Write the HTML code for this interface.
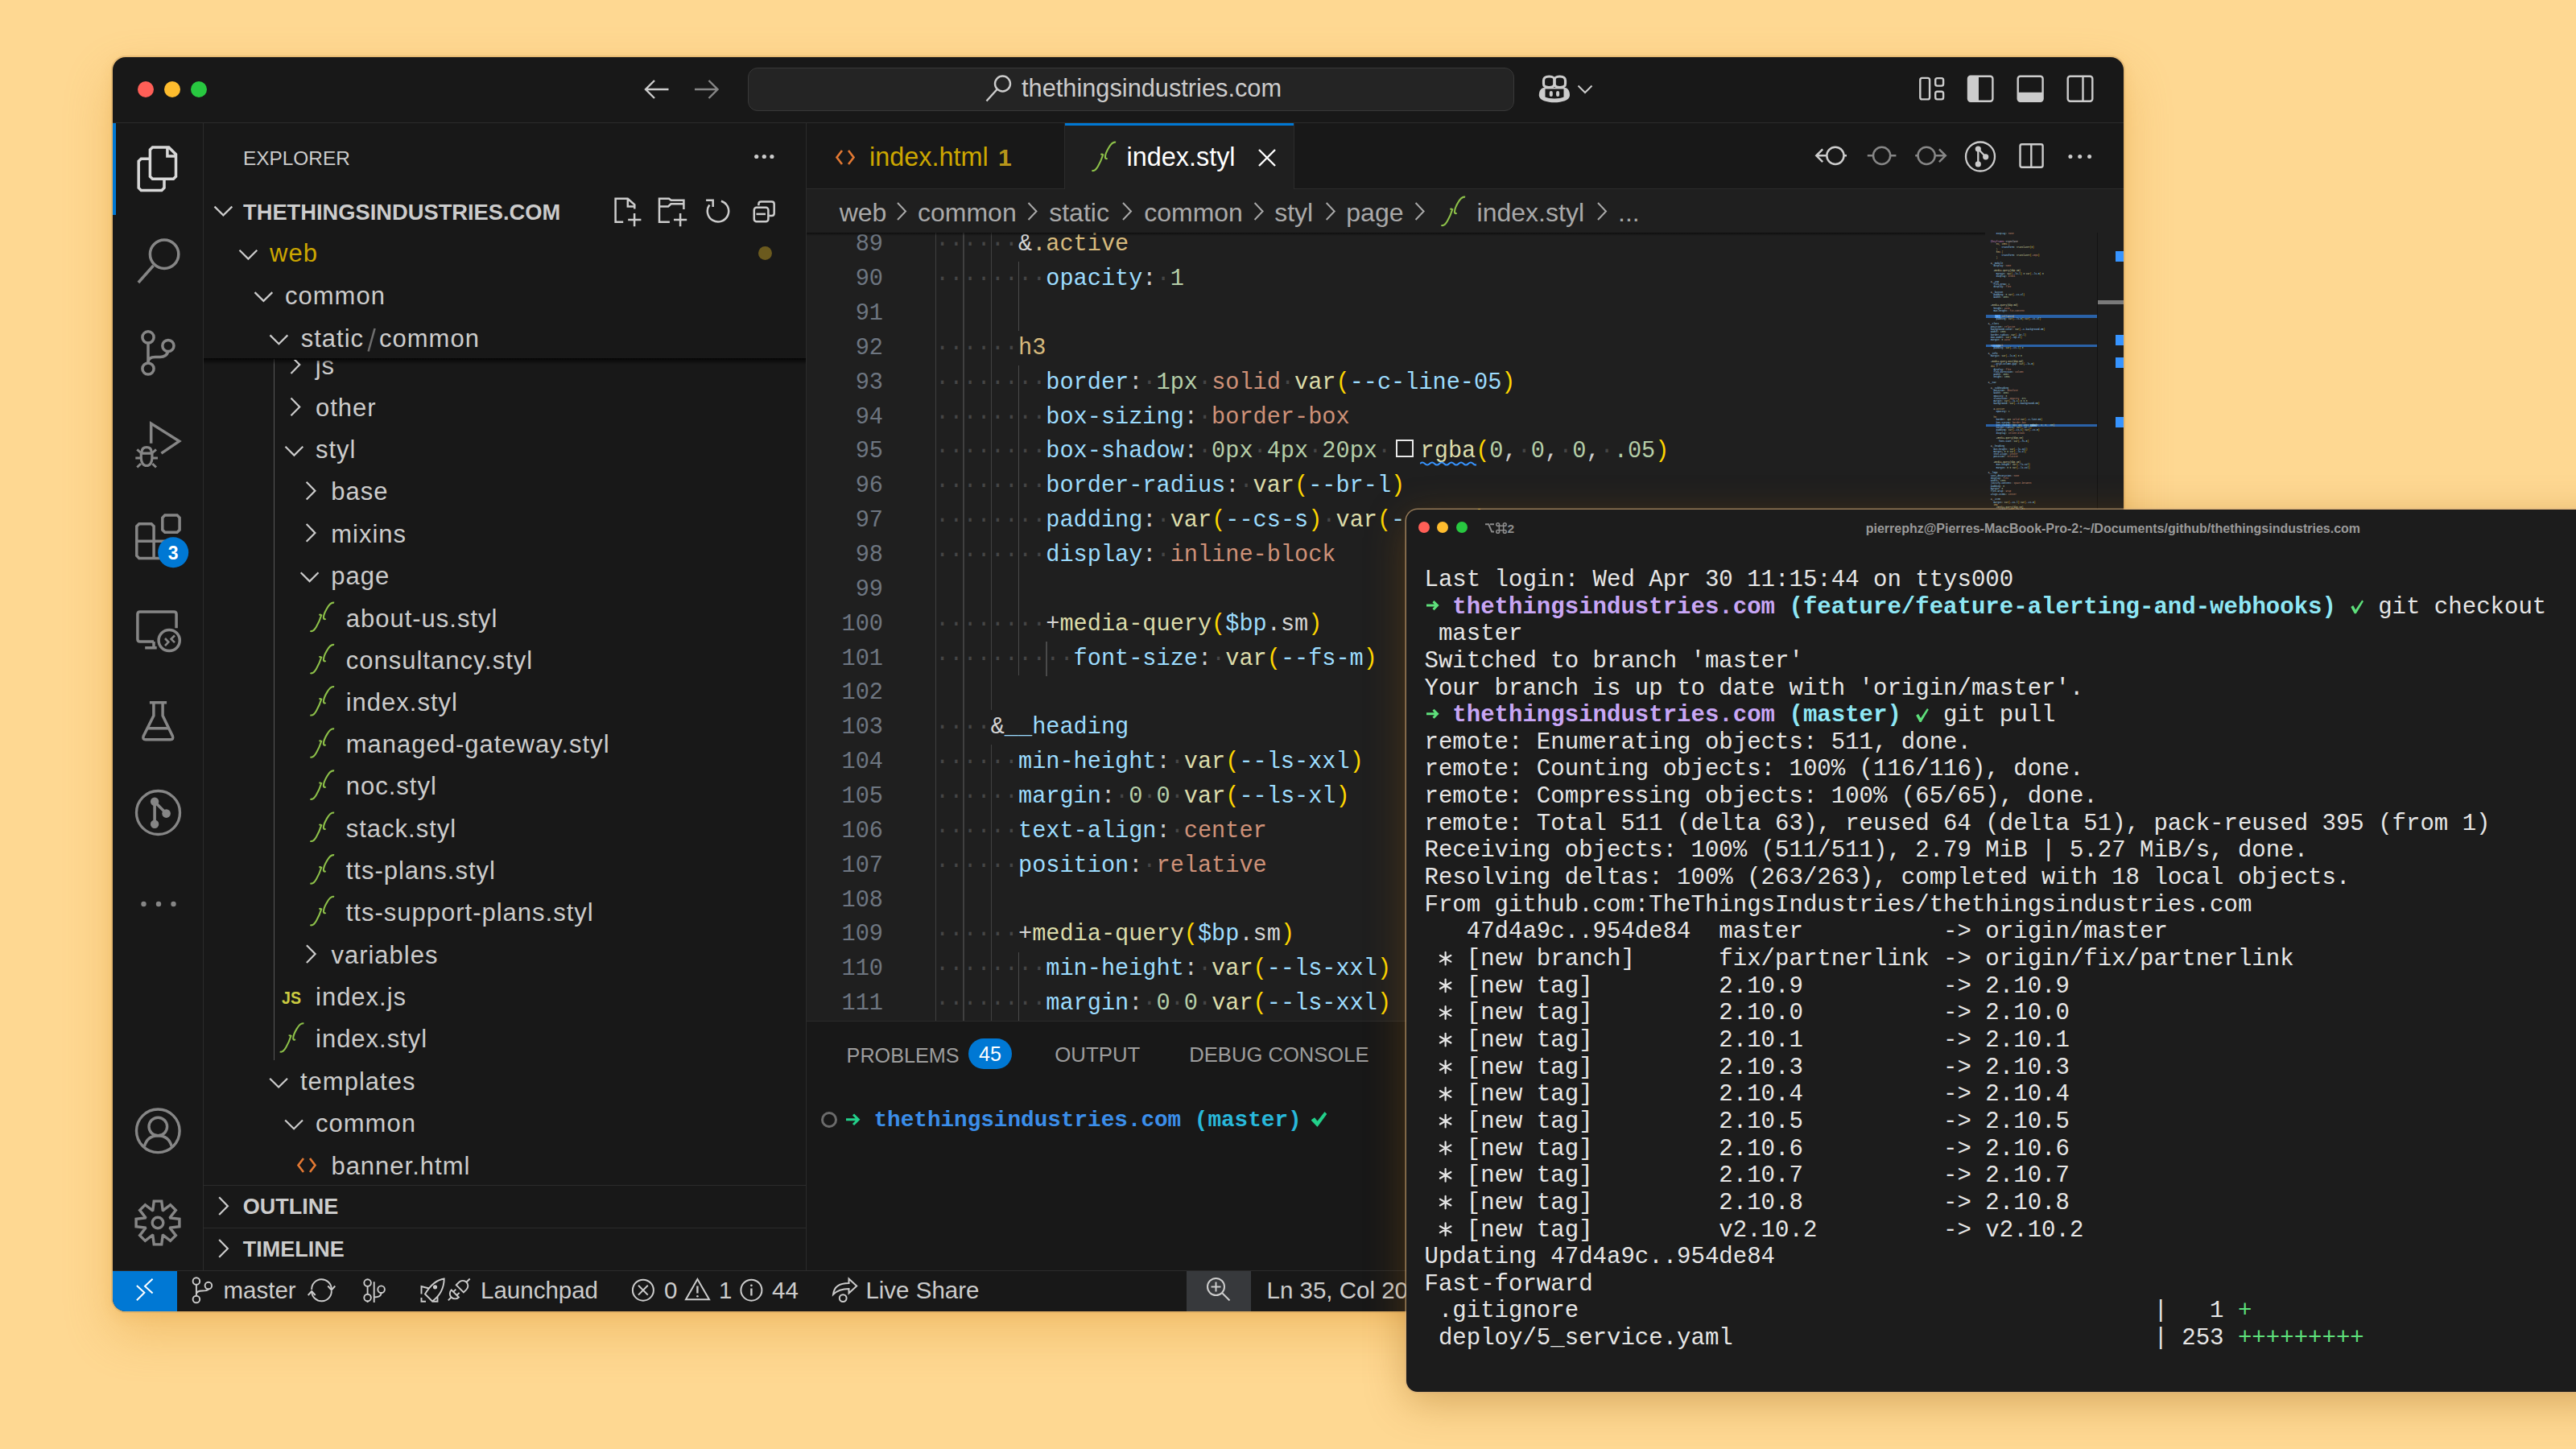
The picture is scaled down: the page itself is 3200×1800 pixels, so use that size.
<!DOCTYPE html><html><head><meta charset="utf-8"><style>html,body{margin:0;padding:0;width:3200px;height:1800px;overflow:hidden;background:#FED892;}body{position:relative;}</style></head><body><div style="position:relative;left:0;top:0;width:3200px;height:1800px;overflow:hidden;background:#FED892">
<div style="position:absolute;left:140px;top:71px;width:2498px;height:1558px;border-radius:16px;background:#181818;box-shadow:0 0 0 2px rgba(205,160,95,0.42),0 26px 60px rgba(215,140,30,0.33),0 4px 16px rgba(210,140,40,0.16);"></div>
<div style="position:absolute;left:140.0px;top:152.0px;width:2498.0px;height:1.0px;background:#2b2b2b;"></div>
<div style="position:absolute;left:171px;top:101px;width:20px;height:20px;border-radius:50%;background:#FF5F57"></div>
<div style="position:absolute;left:204px;top:101px;width:20px;height:20px;border-radius:50%;background:#FEBC2E"></div>
<div style="position:absolute;left:237px;top:101px;width:20px;height:20px;border-radius:50%;background:#28C840"></div>
<div style="position:absolute;left:929px;top:84px;width:950px;height:52px;border-radius:12px;background:#242424;border:1px solid #383838"></div>
<div style="position:absolute;left:1269.00px;top:95.36px;font-family:'Liberation Sans', sans-serif;font-size:30.75px;line-height:30.75px;color:#cccccc;font-weight:400;white-space:pre;">thethingsindustries.com</div>
<div style="position:absolute;left:252.0px;top:153.0px;width:1.0px;height:1425.0px;background:#2b2b2b;"></div>
<div style="position:absolute;left:140.0px;top:153.0px;width:4.0px;height:114.0px;background:#0078d4;"></div>
<div style="position:absolute;left:1001.0px;top:153.0px;width:1.0px;height:1425.0px;background:#2b2b2b;"></div>
<div style="position:absolute;left:302.00px;top:184.66px;font-family:'Liberation Sans', sans-serif;font-size:24.4px;line-height:24.4px;color:#cccccc;font-weight:400;white-space:pre;">EXPLORER</div>
<div style="position:absolute;left:302.00px;top:250.10px;font-family:'Liberation Sans', sans-serif;font-size:27.3px;line-height:27.3px;color:#cccccc;font-weight:700;white-space:pre;">THETHINGSINDUSTRIES.COM</div>
<div style="position:absolute;left:335.00px;top:299.35px;font-family:'Liberation Sans', sans-serif;font-size:31.0px;line-height:31.0px;color:#cca700;font-weight:400;white-space:pre;letter-spacing:1.0px;">web</div>
<div style="position:absolute;left:354.00px;top:351.65px;font-family:'Liberation Sans', sans-serif;font-size:31.0px;line-height:31.0px;color:#cccccc;font-weight:400;white-space:pre;letter-spacing:1.0px;">common</div>
<div style="position:absolute;left:373.70px;top:404.95px;font-family:'Liberation Sans', sans-serif;font-size:31.0px;line-height:31.0px;color:#cccccc;font-weight:400;white-space:pre;letter-spacing:1.0px;">static</div>
<svg style="position:absolute;left:0;top:0" width="1000" height="500"><path d="M465.6,408 L457.6,436.5" stroke="#6e6e6e" stroke-width="2.6"/></svg>
<div style="position:absolute;left:471.00px;top:404.95px;font-family:'Liberation Sans', sans-serif;font-size:31.0px;line-height:31.0px;color:#cccccc;font-weight:400;white-space:pre;letter-spacing:1.0px;">common</div>
<div style="position:absolute;left:942px;top:306px;width:17px;height:17px;border-radius:50%;background:#6b5a1e"></div>
<div style="position:absolute;left:253px;top:446px;width:748px;height:1026px;overflow:hidden">
<div style="position:absolute;left:138.70px;top:-7.15px;font-family:'Liberation Sans', sans-serif;font-size:31.0px;line-height:31.0px;color:#cccccc;font-weight:400;white-space:pre;letter-spacing:1.0px;">js</div>
<div style="position:absolute;left:138.90px;top:45.15px;font-family:'Liberation Sans', sans-serif;font-size:31.0px;line-height:31.0px;color:#cccccc;font-weight:400;white-space:pre;letter-spacing:1.0px;">other</div>
<div style="position:absolute;left:138.90px;top:97.35px;font-family:'Liberation Sans', sans-serif;font-size:31.0px;line-height:31.0px;color:#cccccc;font-weight:400;white-space:pre;letter-spacing:1.0px;">styl</div>
<div style="position:absolute;left:158.20px;top:149.45px;font-family:'Liberation Sans', sans-serif;font-size:31.0px;line-height:31.0px;color:#cccccc;font-weight:400;white-space:pre;letter-spacing:1.0px;">base</div>
<div style="position:absolute;left:158.20px;top:201.65px;font-family:'Liberation Sans', sans-serif;font-size:31.0px;line-height:31.0px;color:#cccccc;font-weight:400;white-space:pre;letter-spacing:1.0px;">mixins</div>
<div style="position:absolute;left:158.20px;top:253.85px;font-family:'Liberation Sans', sans-serif;font-size:31.0px;line-height:31.0px;color:#cccccc;font-weight:400;white-space:pre;letter-spacing:1.0px;">page</div>
<div style="position:absolute;left:176.70px;top:306.65px;font-family:'Liberation Sans', sans-serif;font-size:31.0px;line-height:31.0px;color:#cccccc;font-weight:400;white-space:pre;letter-spacing:1.0px;">about-us.styl</div>
<div style="position:absolute;left:176.70px;top:358.95px;font-family:'Liberation Sans', sans-serif;font-size:31.0px;line-height:31.0px;color:#cccccc;font-weight:400;white-space:pre;letter-spacing:1.0px;">consultancy.styl</div>
<div style="position:absolute;left:176.70px;top:411.05px;font-family:'Liberation Sans', sans-serif;font-size:31.0px;line-height:31.0px;color:#cccccc;font-weight:400;white-space:pre;letter-spacing:1.0px;">index.styl</div>
<div style="position:absolute;left:176.70px;top:463.25px;font-family:'Liberation Sans', sans-serif;font-size:31.0px;line-height:31.0px;color:#cccccc;font-weight:400;white-space:pre;letter-spacing:1.0px;">managed-gateway.styl</div>
<div style="position:absolute;left:176.70px;top:515.45px;font-family:'Liberation Sans', sans-serif;font-size:31.0px;line-height:31.0px;color:#cccccc;font-weight:400;white-space:pre;letter-spacing:1.0px;">noc.styl</div>
<div style="position:absolute;left:176.70px;top:567.55px;font-family:'Liberation Sans', sans-serif;font-size:31.0px;line-height:31.0px;color:#cccccc;font-weight:400;white-space:pre;letter-spacing:1.0px;">stack.styl</div>
<div style="position:absolute;left:176.70px;top:620.15px;font-family:'Liberation Sans', sans-serif;font-size:31.0px;line-height:31.0px;color:#cccccc;font-weight:400;white-space:pre;letter-spacing:1.0px;">tts-plans.styl</div>
<div style="position:absolute;left:176.70px;top:671.85px;font-family:'Liberation Sans', sans-serif;font-size:31.0px;line-height:31.0px;color:#cccccc;font-weight:400;white-space:pre;letter-spacing:1.0px;">tts-support-plans.styl</div>
<div style="position:absolute;left:158.40px;top:724.85px;font-family:'Liberation Sans', sans-serif;font-size:31.0px;line-height:31.0px;color:#cccccc;font-weight:400;white-space:pre;letter-spacing:1.0px;">variables</div>
<div style="position:absolute;left:139.00px;top:777.45px;font-family:'Liberation Sans', sans-serif;font-size:31.0px;line-height:31.0px;color:#cccccc;font-weight:400;white-space:pre;letter-spacing:1.0px;">index.js</div>
<div style="position:absolute;left:139.00px;top:829.25px;font-family:'Liberation Sans', sans-serif;font-size:31.0px;line-height:31.0px;color:#cccccc;font-weight:400;white-space:pre;letter-spacing:1.0px;">index.styl</div>
<div style="position:absolute;left:120.00px;top:882.25px;font-family:'Liberation Sans', sans-serif;font-size:31.0px;line-height:31.0px;color:#cccccc;font-weight:400;white-space:pre;letter-spacing:1.0px;">templates</div>
<div style="position:absolute;left:139.00px;top:934.05px;font-family:'Liberation Sans', sans-serif;font-size:31.0px;line-height:31.0px;color:#cccccc;font-weight:400;white-space:pre;letter-spacing:1.0px;">common</div>
<div style="position:absolute;left:158.40px;top:986.65px;font-family:'Liberation Sans', sans-serif;font-size:31.0px;line-height:31.0px;color:#cccccc;font-weight:400;white-space:pre;letter-spacing:1.0px;">banner.html</div>
<div style="position:absolute;left:87.0px;top:0.0px;width:1.0px;height:871.0px;background:#585858;"></div>
</div>
<div style="position:absolute;left:253.0px;top:445.0px;width:748.0px;height:8.0px;background:linear-gradient(rgba(0,0,0,0.75),rgba(0,0,0,0));"></div>
<div style="position:absolute;left:253.0px;top:1472.0px;width:748.0px;height:1.0px;background:#2b2b2b;"></div>
<div style="position:absolute;left:253.0px;top:1525.0px;width:748.0px;height:1.0px;background:#2b2b2b;"></div>
<div style="position:absolute;left:301.70px;top:1485.75px;font-family:'Liberation Sans', sans-serif;font-size:27.0px;line-height:27.0px;color:#cccccc;font-weight:700;white-space:pre;">OUTLINE</div>
<div style="position:absolute;left:301.70px;top:1538.75px;font-family:'Liberation Sans', sans-serif;font-size:27.0px;line-height:27.0px;color:#cccccc;font-weight:700;white-space:pre;">TIMELINE</div>
<div style="position:absolute;left:1002.0px;top:234.0px;width:1636.0px;height:1.0px;background:#2b2b2b;"></div>
<div style="position:absolute;left:1322.0px;top:153.0px;width:1.0px;height:81.0px;background:#2b2b2b;"></div>
<div style="position:absolute;left:1323.0px;top:153.0px;width:284.0px;height:82.0px;background:#1f1f1f;"></div>
<div style="position:absolute;left:1323.0px;top:153.0px;width:284.0px;height:3.0px;background:#0078d4;"></div>
<div style="position:absolute;left:1607.0px;top:153.0px;width:1.0px;height:81.0px;background:#2b2b2b;"></div>
<div style="position:absolute;left:1080.00px;top:179.16px;font-family:'Liberation Sans', sans-serif;font-size:32.4px;line-height:32.4px;color:#cca700;font-weight:400;white-space:pre;">index.html</div>
<div style="position:absolute;left:1240.00px;top:181.20px;font-family:'Liberation Sans', sans-serif;font-size:30px;line-height:30px;color:#b8961a;font-weight:700;white-space:pre;">1</div>
<div style="position:absolute;left:1399.50px;top:179.16px;font-family:'Liberation Sans', sans-serif;font-size:32.4px;line-height:32.4px;color:#ffffff;font-weight:400;white-space:pre;">index.styl</div>
<div style="position:absolute;left:1002.0px;top:235.0px;width:1636.0px;height:1033.0px;background:#1f1f1f;"></div>
<div style="position:absolute;left:1042.70px;top:247.50px;font-family:'Liberation Sans', sans-serif;font-size:32.0px;line-height:32.0px;color:#a9a9a9;font-weight:400;white-space:pre;">web</div>
<div style="position:absolute;left:1140.00px;top:247.50px;font-family:'Liberation Sans', sans-serif;font-size:32.0px;line-height:32.0px;color:#a9a9a9;font-weight:400;white-space:pre;">common</div>
<div style="position:absolute;left:1303.20px;top:247.50px;font-family:'Liberation Sans', sans-serif;font-size:32.0px;line-height:32.0px;color:#a9a9a9;font-weight:400;white-space:pre;">static</div>
<div style="position:absolute;left:1421.20px;top:247.50px;font-family:'Liberation Sans', sans-serif;font-size:32.0px;line-height:32.0px;color:#a9a9a9;font-weight:400;white-space:pre;">common</div>
<div style="position:absolute;left:1583.20px;top:247.50px;font-family:'Liberation Sans', sans-serif;font-size:32.0px;line-height:32.0px;color:#a9a9a9;font-weight:400;white-space:pre;">styl</div>
<div style="position:absolute;left:1672.30px;top:247.50px;font-family:'Liberation Sans', sans-serif;font-size:32.0px;line-height:32.0px;color:#a9a9a9;font-weight:400;white-space:pre;">page</div>
<div style="position:absolute;left:1834.60px;top:247.50px;font-family:'Liberation Sans', sans-serif;font-size:32.0px;line-height:32.0px;color:#a9a9a9;font-weight:400;white-space:pre;">index.styl</div>
<div style="position:absolute;left:2010.00px;top:247.50px;font-family:'Liberation Sans', sans-serif;font-size:32.0px;line-height:32.0px;color:#a9a9a9;font-weight:400;white-space:pre;">...</div>
<div style="position:absolute;left:1002px;top:289px;width:1636px;height:979px;overflow:hidden">
<div style="position:absolute;left:-105px;top:-41.58px;width:200px;text-align:right;font-family:'Liberation Mono', monospace;font-size:28.583px;line-height:28.583px;color:#6e7681">88</div>
<div style="position:absolute;left:-105px;top:1.28px;width:200px;text-align:right;font-family:'Liberation Mono', monospace;font-size:28.583px;line-height:28.583px;color:#6e7681">89</div>
<div style="position:absolute;left:-105px;top:44.14px;width:200px;text-align:right;font-family:'Liberation Mono', monospace;font-size:28.583px;line-height:28.583px;color:#6e7681">90</div>
<div style="position:absolute;left:-105px;top:87.00px;width:200px;text-align:right;font-family:'Liberation Mono', monospace;font-size:28.583px;line-height:28.583px;color:#6e7681">91</div>
<div style="position:absolute;left:-105px;top:129.86px;width:200px;text-align:right;font-family:'Liberation Mono', monospace;font-size:28.583px;line-height:28.583px;color:#6e7681">92</div>
<div style="position:absolute;left:-105px;top:172.72px;width:200px;text-align:right;font-family:'Liberation Mono', monospace;font-size:28.583px;line-height:28.583px;color:#6e7681">93</div>
<div style="position:absolute;left:-105px;top:215.58px;width:200px;text-align:right;font-family:'Liberation Mono', monospace;font-size:28.583px;line-height:28.583px;color:#6e7681">94</div>
<div style="position:absolute;left:-105px;top:258.44px;width:200px;text-align:right;font-family:'Liberation Mono', monospace;font-size:28.583px;line-height:28.583px;color:#6e7681">95</div>
<div style="position:absolute;left:-105px;top:301.30px;width:200px;text-align:right;font-family:'Liberation Mono', monospace;font-size:28.583px;line-height:28.583px;color:#6e7681">96</div>
<div style="position:absolute;left:-105px;top:344.16px;width:200px;text-align:right;font-family:'Liberation Mono', monospace;font-size:28.583px;line-height:28.583px;color:#6e7681">97</div>
<div style="position:absolute;left:-105px;top:387.02px;width:200px;text-align:right;font-family:'Liberation Mono', monospace;font-size:28.583px;line-height:28.583px;color:#6e7681">98</div>
<div style="position:absolute;left:-105px;top:429.88px;width:200px;text-align:right;font-family:'Liberation Mono', monospace;font-size:28.583px;line-height:28.583px;color:#6e7681">99</div>
<div style="position:absolute;left:-105px;top:472.74px;width:200px;text-align:right;font-family:'Liberation Mono', monospace;font-size:28.583px;line-height:28.583px;color:#6e7681">100</div>
<div style="position:absolute;left:-105px;top:515.60px;width:200px;text-align:right;font-family:'Liberation Mono', monospace;font-size:28.583px;line-height:28.583px;color:#6e7681">101</div>
<div style="position:absolute;left:-105px;top:558.46px;width:200px;text-align:right;font-family:'Liberation Mono', monospace;font-size:28.583px;line-height:28.583px;color:#6e7681">102</div>
<div style="position:absolute;left:-105px;top:601.32px;width:200px;text-align:right;font-family:'Liberation Mono', monospace;font-size:28.583px;line-height:28.583px;color:#6e7681">103</div>
<div style="position:absolute;left:-105px;top:644.18px;width:200px;text-align:right;font-family:'Liberation Mono', monospace;font-size:28.583px;line-height:28.583px;color:#6e7681">104</div>
<div style="position:absolute;left:-105px;top:687.04px;width:200px;text-align:right;font-family:'Liberation Mono', monospace;font-size:28.583px;line-height:28.583px;color:#6e7681">105</div>
<div style="position:absolute;left:-105px;top:729.90px;width:200px;text-align:right;font-family:'Liberation Mono', monospace;font-size:28.583px;line-height:28.583px;color:#6e7681">106</div>
<div style="position:absolute;left:-105px;top:772.76px;width:200px;text-align:right;font-family:'Liberation Mono', monospace;font-size:28.583px;line-height:28.583px;color:#6e7681">107</div>
<div style="position:absolute;left:-105px;top:815.62px;width:200px;text-align:right;font-family:'Liberation Mono', monospace;font-size:28.583px;line-height:28.583px;color:#6e7681">108</div>
<div style="position:absolute;left:-105px;top:858.48px;width:200px;text-align:right;font-family:'Liberation Mono', monospace;font-size:28.583px;line-height:28.583px;color:#6e7681">109</div>
<div style="position:absolute;left:-105px;top:901.34px;width:200px;text-align:right;font-family:'Liberation Mono', monospace;font-size:28.583px;line-height:28.583px;color:#6e7681">110</div>
<div style="position:absolute;left:-105px;top:944.20px;width:200px;text-align:right;font-family:'Liberation Mono', monospace;font-size:28.583px;line-height:28.583px;color:#6e7681">111</div>
<div style="position:absolute;left:-105px;top:987.06px;width:200px;text-align:right;font-family:'Liberation Mono', monospace;font-size:28.583px;line-height:28.583px;color:#6e7681">112</div>
<div style="position:absolute;left:160.1px;top:-49.5px;width:1.3px;height:1071.5px;background:#404040;"></div>
<div style="position:absolute;left:194.4px;top:-49.5px;width:1.3px;height:1071.5px;background:#404040;"></div>
<div style="position:absolute;left:228.7px;top:-49.5px;width:1.3px;height:642.9px;background:#404040;"></div>
<div style="position:absolute;left:228.7px;top:636.3px;width:1.3px;height:385.7px;background:#404040;"></div>
<div style="position:absolute;left:263.0px;top:36.3px;width:1.3px;height:85.7px;background:#4a4a4a;"></div>
<div style="position:absolute;left:263.0px;top:164.8px;width:1.3px;height:385.7px;background:#4a4a4a;"></div>
<div style="position:absolute;left:263.0px;top:893.5px;width:1.3px;height:128.6px;background:#4a4a4a;"></div>
<div style="position:absolute;left:297.3px;top:507.7px;width:1.3px;height:42.9px;background:#4a4a4a;"></div>
<div style="position:absolute;left:160.10px;top:1.28px;font-family:'Liberation Mono', monospace;font-size:28.583px;line-height:28.583px;color:#d4d4d4;font-weight:400;white-space:pre;"><span style="color:#454545">······</span><span style="color:#d4d4d4">&amp;</span><span style="color:#d7ba7d">.active</span></div>
<div style="position:absolute;left:160.10px;top:44.14px;font-family:'Liberation Mono', monospace;font-size:28.583px;line-height:28.583px;color:#d4d4d4;font-weight:400;white-space:pre;"><span style="color:#454545">········</span><span style="color:#9cdcfe">opacity</span><span style="color:#cccccc">:</span><span style="color:#454545">·</span><span style="color:#b5cea8">1</span></div>
<div style="position:absolute;left:160.10px;top:129.86px;font-family:'Liberation Mono', monospace;font-size:28.583px;line-height:28.583px;color:#d4d4d4;font-weight:400;white-space:pre;"><span style="color:#454545">······</span><span style="color:#d7ba7d">h3</span></div>
<div style="position:absolute;left:160.10px;top:172.72px;font-family:'Liberation Mono', monospace;font-size:28.583px;line-height:28.583px;color:#d4d4d4;font-weight:400;white-space:pre;"><span style="color:#454545">········</span><span style="color:#9cdcfe">border</span><span style="color:#cccccc">:</span><span style="color:#454545">·</span><span style="color:#b5cea8">1px</span><span style="color:#454545">·</span><span style="color:#ce9178">solid</span><span style="color:#454545">·</span><span style="color:#dcdcaa">var</span><span style="color:#ffd700">(</span><span style="color:#9cdcfe">--c-line-05</span><span style="color:#ffd700">)</span></div>
<div style="position:absolute;left:160.10px;top:215.58px;font-family:'Liberation Mono', monospace;font-size:28.583px;line-height:28.583px;color:#d4d4d4;font-weight:400;white-space:pre;"><span style="color:#454545">········</span><span style="color:#9cdcfe">box-sizing</span><span style="color:#cccccc">:</span><span style="color:#454545">·</span><span style="color:#ce9178">border-box</span></div>
<div style="position:absolute;left:160.10px;top:258.44px;font-family:'Liberation Mono', monospace;font-size:28.583px;line-height:28.583px;color:#d4d4d4;font-weight:400;white-space:pre;"><span style="color:#454545">········</span><span style="color:#9cdcfe">box-shadow</span><span style="color:#cccccc">:</span><span style="color:#454545">·</span><span style="color:#b5cea8">0px</span><span style="color:#454545">·</span><span style="color:#b5cea8">4px</span><span style="color:#454545">·</span><span style="color:#b5cea8">20px</span><span style="color:#454545">·</span><span style="display:inline-block;width:36.5px;height:10px;position:relative"><span style="position:absolute;left:6px;top:-12px;width:18px;height:18px;border:2.4px solid #e8e8e8;background:#1d1d1d"></span></span><span style="color:#dcdcaa">rgba</span><span style="color:#ffd700">(</span><span style="color:#b5cea8">0</span><span style="color:#cccccc">,</span><span style="color:#454545">·</span><span style="color:#b5cea8">0</span><span style="color:#cccccc">,</span><span style="color:#454545">·</span><span style="color:#b5cea8">0</span><span style="color:#cccccc">,</span><span style="color:#454545">·</span><span style="color:#b5cea8">.05</span><span style="color:#ffd700">)</span></div>
<div style="position:absolute;left:160.10px;top:301.30px;font-family:'Liberation Mono', monospace;font-size:28.583px;line-height:28.583px;color:#d4d4d4;font-weight:400;white-space:pre;"><span style="color:#454545">········</span><span style="color:#9cdcfe">border-radius</span><span style="color:#cccccc">:</span><span style="color:#454545">·</span><span style="color:#dcdcaa">var</span><span style="color:#ffd700">(</span><span style="color:#9cdcfe">--br-l</span><span style="color:#ffd700">)</span></div>
<div style="position:absolute;left:160.10px;top:344.16px;font-family:'Liberation Mono', monospace;font-size:28.583px;line-height:28.583px;color:#d4d4d4;font-weight:400;white-space:pre;"><span style="color:#454545">········</span><span style="color:#9cdcfe">padding</span><span style="color:#cccccc">:</span><span style="color:#454545">·</span><span style="color:#dcdcaa">var</span><span style="color:#ffd700">(</span><span style="color:#9cdcfe">--cs-s</span><span style="color:#ffd700">)</span><span style="color:#454545">·</span><span style="color:#dcdcaa">var</span><span style="color:#ffd700">(</span><span style="color:#9cdcfe">--cs-m</span><span style="color:#ffd700">)</span></div>
<div style="position:absolute;left:160.10px;top:387.02px;font-family:'Liberation Mono', monospace;font-size:28.583px;line-height:28.583px;color:#d4d4d4;font-weight:400;white-space:pre;"><span style="color:#454545">········</span><span style="color:#9cdcfe">display</span><span style="color:#cccccc">:</span><span style="color:#454545">·</span><span style="color:#ce9178">inline-block</span></div>
<div style="position:absolute;left:160.10px;top:472.74px;font-family:'Liberation Mono', monospace;font-size:28.583px;line-height:28.583px;color:#d4d4d4;font-weight:400;white-space:pre;"><span style="color:#454545">········</span><span style="color:#d4d4d4">+</span><span style="color:#dcdcaa">media-query</span><span style="color:#ffd700">(</span><span style="color:#9cdcfe">$bp</span><span style="color:#d4d4d4">.</span><span style="color:#d4d4d4">sm</span><span style="color:#ffd700">)</span></div>
<div style="position:absolute;left:160.10px;top:515.60px;font-family:'Liberation Mono', monospace;font-size:28.583px;line-height:28.583px;color:#d4d4d4;font-weight:400;white-space:pre;"><span style="color:#454545">··········</span><span style="color:#9cdcfe">font-size</span><span style="color:#cccccc">:</span><span style="color:#454545">·</span><span style="color:#dcdcaa">var</span><span style="color:#ffd700">(</span><span style="color:#9cdcfe">--fs-m</span><span style="color:#ffd700">)</span></div>
<div style="position:absolute;left:160.10px;top:601.32px;font-family:'Liberation Mono', monospace;font-size:28.583px;line-height:28.583px;color:#d4d4d4;font-weight:400;white-space:pre;"><span style="color:#454545">····</span><span style="color:#d4d4d4">&amp;</span><span style="color:#9cdcfe">__heading</span></div>
<div style="position:absolute;left:160.10px;top:644.18px;font-family:'Liberation Mono', monospace;font-size:28.583px;line-height:28.583px;color:#d4d4d4;font-weight:400;white-space:pre;"><span style="color:#454545">······</span><span style="color:#9cdcfe">min-height</span><span style="color:#cccccc">:</span><span style="color:#454545">·</span><span style="color:#dcdcaa">var</span><span style="color:#ffd700">(</span><span style="color:#9cdcfe">--ls-xxl</span><span style="color:#ffd700">)</span></div>
<div style="position:absolute;left:160.10px;top:687.04px;font-family:'Liberation Mono', monospace;font-size:28.583px;line-height:28.583px;color:#d4d4d4;font-weight:400;white-space:pre;"><span style="color:#454545">······</span><span style="color:#9cdcfe">margin</span><span style="color:#cccccc">:</span><span style="color:#454545">·</span><span style="color:#b5cea8">0</span><span style="color:#454545">·</span><span style="color:#b5cea8">0</span><span style="color:#454545">·</span><span style="color:#dcdcaa">var</span><span style="color:#ffd700">(</span><span style="color:#9cdcfe">--ls-xl</span><span style="color:#ffd700">)</span></div>
<div style="position:absolute;left:160.10px;top:729.90px;font-family:'Liberation Mono', monospace;font-size:28.583px;line-height:28.583px;color:#d4d4d4;font-weight:400;white-space:pre;"><span style="color:#454545">······</span><span style="color:#9cdcfe">text-align</span><span style="color:#cccccc">:</span><span style="color:#454545">·</span><span style="color:#ce9178">center</span></div>
<div style="position:absolute;left:160.10px;top:772.76px;font-family:'Liberation Mono', monospace;font-size:28.583px;line-height:28.583px;color:#d4d4d4;font-weight:400;white-space:pre;"><span style="color:#454545">······</span><span style="color:#9cdcfe">position</span><span style="color:#cccccc">:</span><span style="color:#454545">·</span><span style="color:#ce9178">relative</span></div>
<div style="position:absolute;left:160.10px;top:858.48px;font-family:'Liberation Mono', monospace;font-size:28.583px;line-height:28.583px;color:#d4d4d4;font-weight:400;white-space:pre;"><span style="color:#454545">······</span><span style="color:#d4d4d4">+</span><span style="color:#dcdcaa">media-query</span><span style="color:#ffd700">(</span><span style="color:#9cdcfe">$bp</span><span style="color:#d4d4d4">.</span><span style="color:#d4d4d4">sm</span><span style="color:#ffd700">)</span></div>
<div style="position:absolute;left:160.10px;top:901.34px;font-family:'Liberation Mono', monospace;font-size:28.583px;line-height:28.583px;color:#d4d4d4;font-weight:400;white-space:pre;"><span style="color:#454545">········</span><span style="color:#9cdcfe">min-height</span><span style="color:#cccccc">:</span><span style="color:#454545">·</span><span style="color:#dcdcaa">var</span><span style="color:#ffd700">(</span><span style="color:#9cdcfe">--ls-xxl</span><span style="color:#ffd700">)</span></div>
<div style="position:absolute;left:160.10px;top:944.20px;font-family:'Liberation Mono', monospace;font-size:28.583px;line-height:28.583px;color:#d4d4d4;font-weight:400;white-space:pre;"><span style="color:#454545">········</span><span style="color:#9cdcfe">margin</span><span style="color:#cccccc">:</span><span style="color:#454545">·</span><span style="color:#b5cea8">0</span><span style="color:#454545">·</span><span style="color:#b5cea8">0</span><span style="color:#454545">·</span><span style="color:#dcdcaa">var</span><span style="color:#ffd700">(</span><span style="color:#9cdcfe">--ls-xxl</span><span style="color:#ffd700">)</span></div>
<svg style="position:absolute;left:762px;top:284px" width="70" height="8"><path d="M0 3 Q3 0 6 3 Q9 6 12 3 Q15 0 18 3 Q21 6 24 3 Q27 0 30 3 Q33 6 36 3 Q39 0 42 3 Q45 6 48 3 Q51 0 54 3 Q57 6 60 3 Q63 0 66 3 Q69 6 72 3" fill="none" stroke="#3794ff" stroke-width="2"/></svg>
</div>
<div style="position:absolute;left:1002.0px;top:289.0px;width:1464.0px;height:4.0px;background:linear-gradient(rgba(0,0,0,0.55),rgba(0,0,0,0));"></div>
<div style="position:absolute;left:1002.0px;top:1268.0px;width:1636.0px;height:310.0px;background:#181818;"></div>
<div style="position:absolute;left:1002.0px;top:1268.0px;width:1636.0px;height:1.0px;background:#2b2b2b;"></div>
<div style="position:absolute;left:1051.60px;top:1298.58px;font-family:'Liberation Sans', sans-serif;font-size:25.2px;line-height:25.2px;color:#9d9d9d;font-weight:400;white-space:pre;">PROBLEMS</div>
<div style="position:absolute;left:1203px;top:1290px;width:54px;height:38px;border-radius:19px;background:#0078d4;color:#fff;font-family:'Liberation Sans', sans-serif;font-size:25px;line-height:38px;text-align:center">45</div>
<div style="position:absolute;left:1310.30px;top:1298.07px;font-family:'Liberation Sans', sans-serif;font-size:25.8px;line-height:25.8px;color:#9d9d9d;font-weight:400;white-space:pre;">OUTPUT</div>
<div style="position:absolute;left:1477.30px;top:1298.24px;font-family:'Liberation Sans', sans-serif;font-size:25.6px;line-height:25.6px;color:#9d9d9d;font-weight:400;white-space:pre;">DEBUG CONSOLE</div>
<div style="position:absolute;left:1085.50px;top:1378.17px;font-family:'Liberation Mono', monospace;font-size:27.667px;line-height:27.667px;color:#3b8eea;font-weight:700;white-space:pre;">thethingsindustries.com <span style="color:#29b8db">(master)</span></div>
<div style="position:absolute;left:1020px;top:1381px;width:14px;height:14px;border-radius:50%;border:3px solid #6b6b6b"></div>
<div style="position:absolute;left:140.0px;top:1578.0px;width:2498.0px;height:1.0px;background:#2b2b2b;"></div>
<div style="position:absolute;left:140px;top:1579px;width:80px;height:50px;background:#0078d4;border-bottom-left-radius:16px"></div>
<div style="position:absolute;left:277.50px;top:1588.33px;font-family:'Liberation Sans', sans-serif;font-size:29.5px;line-height:29.5px;color:#cccccc;font-weight:400;white-space:pre;">master</div>
<div style="position:absolute;left:597.00px;top:1588.33px;font-family:'Liberation Sans', sans-serif;font-size:29.5px;line-height:29.5px;color:#cccccc;font-weight:400;white-space:pre;">Launchpad</div>
<div style="position:absolute;left:825.00px;top:1588.33px;font-family:'Liberation Sans', sans-serif;font-size:29.5px;line-height:29.5px;color:#cccccc;font-weight:400;white-space:pre;">0</div>
<div style="position:absolute;left:893.00px;top:1588.33px;font-family:'Liberation Sans', sans-serif;font-size:29.5px;line-height:29.5px;color:#cccccc;font-weight:400;white-space:pre;">1</div>
<div style="position:absolute;left:959.00px;top:1588.33px;font-family:'Liberation Sans', sans-serif;font-size:29.5px;line-height:29.5px;color:#cccccc;font-weight:400;white-space:pre;">44</div>
<div style="position:absolute;left:1075.40px;top:1588.33px;font-family:'Liberation Sans', sans-serif;font-size:29.5px;line-height:29.5px;color:#cccccc;font-weight:400;white-space:pre;">Live Share</div>
<div style="position:absolute;left:1474.0px;top:1579.0px;width:80.0px;height:50.0px;background:#37393c;"></div>
<div style="position:absolute;left:1573.50px;top:1588.33px;font-family:'Liberation Sans', sans-serif;font-size:29.5px;line-height:29.5px;color:#cccccc;font-weight:400;white-space:pre;">Ln 35, Col 20</div>
<div style="position:absolute;left:2604.5px;top:289.0px;width:1.5px;height:343.0px;background:#141414;"></div>
<div style="position:absolute;left:2606.0px;top:373.0px;width:32.0px;height:4.5px;background:#7a7a7a;"></div>
<div style="position:absolute;left:2627.5px;top:312.0px;width:10.5px;height:13.0px;background:#3794ff;"></div>
<div style="position:absolute;left:2627.5px;top:416.0px;width:10.5px;height:13.0px;background:#3794ff;"></div>
<div style="position:absolute;left:2627.5px;top:443.5px;width:10.5px;height:13.0px;background:#3794ff;"></div>
<div style="position:absolute;left:2627.5px;top:518.0px;width:10.5px;height:13.0px;background:#3794ff;"></div>
<div style="position:absolute;left:2466px;top:289px;width:139px;height:344px;overflow:hidden">
<div style="position:absolute;left:0.8px;top:102.2px;width:137.9px;height:3.6px;background:#2a62a8;"></div>
<div style="position:absolute;left:12.0px;top:102.2px;width:6.8px;height:3.6px;background:#4d9cf5;"></div>
<div style="position:absolute;left:0.8px;top:138.5px;width:137.9px;height:3.6px;background:#2a62a8;"></div>
<div style="position:absolute;left:9.0px;top:138.5px;width:9.8px;height:3.6px;background:#4d9cf5;"></div>
<div style="position:absolute;left:0.8px;top:237.5px;width:137.9px;height:3.6px;background:#2a62a8;"></div>
<div style="position:absolute;left:56.0px;top:237.5px;width:7.5px;height:3.6px;background:#4d9cf5;"></div>
<div style="position:absolute;left:0.30px;top:0.25px;font-family:'Liberation Mono',monospace;font-size:2.800px;line-height:3.3px;white-space:pre;opacity:1">        <span style="color:#9cdcfe">display</span><span style="color:#cccccc">:</span> <span style="color:#ce9178">none</span></div>
<div style="position:absolute;left:0.30px;top:10.15px;font-family:'Liberation Mono',monospace;font-size:2.800px;line-height:3.3px;white-space:pre;opacity:1">    <span style="color:#c586c0">@keyframes</span><span style="color:#d4d4d4"> translate</span></div>
<div style="position:absolute;left:0.30px;top:13.45px;font-family:'Liberation Mono',monospace;font-size:2.800px;line-height:3.3px;white-space:pre;opacity:1">        <span style="color:#d7ba7d">0%, 100% {</span></div>
<div style="position:absolute;left:0.30px;top:16.75px;font-family:'Liberation Mono',monospace;font-size:2.800px;line-height:3.3px;white-space:pre;opacity:1">            <span style="color:#9cdcfe">transform</span><span style="color:#cccccc">:</span> <span style="color:#dcdcaa">translateY</span><span style="color:#ffd700">(</span><span style="color:#b5cea8">0</span><span style="color:#ffd700">)</span></div>
<div style="position:absolute;left:0.30px;top:20.05px;font-family:'Liberation Mono',monospace;font-size:2.800px;line-height:3.3px;white-space:pre;opacity:1">        <span style="color:#d7ba7d">}</span></div>
<div style="position:absolute;left:0.30px;top:23.35px;font-family:'Liberation Mono',monospace;font-size:2.800px;line-height:3.3px;white-space:pre;opacity:1">        <span style="color:#d7ba7d">50% {</span></div>
<div style="position:absolute;left:0.30px;top:26.65px;font-family:'Liberation Mono',monospace;font-size:2.800px;line-height:3.3px;white-space:pre;opacity:1">            <span style="color:#9cdcfe">transform</span><span style="color:#cccccc">:</span> <span style="color:#dcdcaa">translateY</span><span style="color:#ffd700">(</span><span style="color:#ce9178">-10px</span><span style="color:#ffd700">)</span></div>
<div style="position:absolute;left:0.30px;top:29.95px;font-family:'Liberation Mono',monospace;font-size:2.800px;line-height:3.3px;white-space:pre;opacity:1">        <span style="color:#d7ba7d">}</span></div>
<div style="position:absolute;left:0.30px;top:36.55px;font-family:'Liberation Mono',monospace;font-size:2.800px;line-height:3.3px;white-space:pre;opacity:1">    <span style="color:#d4d4d4">&amp;</span><span style="color:#9cdcfe">__mobile</span></div>
<div style="position:absolute;left:0.30px;top:39.85px;font-family:'Liberation Mono',monospace;font-size:2.800px;line-height:3.3px;white-space:pre;opacity:1">      <span style="color:#9cdcfe">display</span><span style="color:#cccccc">:</span> <span style="color:#ce9178">none</span></div>
<div style="position:absolute;left:0.30px;top:46.45px;font-family:'Liberation Mono',monospace;font-size:2.800px;line-height:3.3px;white-space:pre;opacity:1">      <span style="color:#d4d4d4">+</span><span style="color:#dcdcaa">media-query($bp.sm)</span></div>
<div style="position:absolute;left:0.30px;top:49.75px;font-family:'Liberation Mono',monospace;font-size:2.800px;line-height:3.3px;white-space:pre;opacity:1">        <span style="color:#9cdcfe">margin</span><span style="color:#cccccc">:</span> <span style="color:#dcdcaa">var</span><span style="color:#ffd700">(</span><span style="color:#9cdcfe">--ls-l</span><span style="color:#ffd700">)</span> <span style="color:#b5cea8">0</span> <span style="color:#dcdcaa">var</span><span style="color:#ffd700">(</span><span style="color:#9cdcfe">--ls-m</span><span style="color:#ffd700">)</span> <span style="color:#b5cea8">0</span></div>
<div style="position:absolute;left:0.30px;top:53.05px;font-family:'Liberation Mono',monospace;font-size:2.800px;line-height:3.3px;white-space:pre;opacity:1">        <span style="color:#9cdcfe">display</span><span style="color:#cccccc">:</span> <span style="color:#ce9178">block</span></div>
<div style="position:absolute;left:0.30px;top:59.65px;font-family:'Liberation Mono',monospace;font-size:2.800px;line-height:3.3px;white-space:pre;opacity:1">    <span style="color:#d4d4d4">&amp;</span><span style="color:#9cdcfe">__top</span></div>
<div style="position:absolute;left:0.30px;top:62.95px;font-family:'Liberation Mono',monospace;font-size:2.800px;line-height:3.3px;white-space:pre;opacity:1">      <span style="color:#9cdcfe">flex-grow</span><span style="color:#cccccc">:</span> <span style="color:#b5cea8">1</span></div>
<div style="position:absolute;left:0.30px;top:66.25px;font-family:'Liberation Mono',monospace;font-size:2.800px;line-height:3.3px;white-space:pre;opacity:1">      <span style="color:#9cdcfe">display</span><span style="color:#cccccc">:</span> <span style="color:#ce9178">flex</span></div>
<div style="position:absolute;left:0.30px;top:72.85px;font-family:'Liberation Mono',monospace;font-size:2.800px;line-height:3.3px;white-space:pre;opacity:1">    <span style="color:#d4d4d4">&amp;</span><span style="color:#9cdcfe">__button</span></div>
<div style="position:absolute;left:0.30px;top:76.15px;font-family:'Liberation Mono',monospace;font-size:2.800px;line-height:3.3px;white-space:pre;opacity:1">      <span style="color:#9cdcfe">padding</span><span style="color:#cccccc">:</span> <span style="color:#b5cea8">0</span> <span style="color:#dcdcaa">var</span><span style="color:#ffd700">(</span><span style="color:#9cdcfe">--cs-xl</span><span style="color:#ffd700">)</span></div>
<div style="position:absolute;left:0.30px;top:79.45px;font-family:'Liberation Mono',monospace;font-size:2.800px;line-height:3.3px;white-space:pre;opacity:1">      <span style="color:#9cdcfe">width</span><span style="color:#cccccc">:</span> <span style="color:#b5cea8">100%</span></div>
<div style="position:absolute;left:0.30px;top:89.35px;font-family:'Liberation Mono',monospace;font-size:2.800px;line-height:3.3px;white-space:pre;opacity:1">    <span style="color:#d4d4d4">+</span><span style="color:#dcdcaa">media-query($bp.md)</span></div>
<div style="position:absolute;left:0.30px;top:92.65px;font-family:'Liberation Mono',monospace;font-size:2.800px;line-height:3.3px;white-space:pre;opacity:1">      <span style="color:#9cdcfe">height</span><span style="color:#cccccc">:</span> <span style="color:#ce9178">auto</span></div>
<div style="position:absolute;left:0.30px;top:95.95px;font-family:'Liberation Mono',monospace;font-size:2.800px;line-height:3.3px;white-space:pre;opacity:1">      <span style="color:#9cdcfe">max-height</span><span style="color:#cccccc">:</span> <span style="color:#ce9178">fit-content</span></div>
<div style="position:absolute;left:0.30px;top:102.55px;font-family:'Liberation Mono',monospace;font-size:2.800px;line-height:3.3px;white-space:pre;opacity:1">        <span style="color:#d4d4d4">&amp;</span><span style="color:#d7ba7d">.--collapsed</span></div>
<div style="position:absolute;left:0.30px;top:105.85px;font-family:'Liberation Mono',monospace;font-size:2.800px;line-height:3.3px;white-space:pre;opacity:1">        <span style="color:#9cdcfe">padding</span><span style="color:#cccccc">:</span> <span style="color:#dcdcaa">var</span><span style="color:#ffd700">(</span><span style="color:#9cdcfe">--ls-m</span><span style="color:#ffd700">)</span> <span style="color:#dcdcaa">var</span><span style="color:#ffd700">(</span><span style="color:#9cdcfe">--cs-xl</span><span style="color:#ffd700">)</span></div>
<div style="position:absolute;left:0.30px;top:112.45px;font-family:'Liberation Mono',monospace;font-size:2.800px;line-height:3.3px;white-space:pre;opacity:1">  <span style="color:#d4d4d4">&amp;</span><span style="color:#9cdcfe">__slots</span></div>
<div style="position:absolute;left:0.30px;top:115.75px;font-family:'Liberation Mono',monospace;font-size:2.800px;line-height:3.3px;white-space:pre;opacity:1">    <span style="color:#9cdcfe">position</span><span style="color:#cccccc">:</span> <span style="color:#ce9178">relative</span></div>
<div style="position:absolute;left:0.30px;top:119.05px;font-family:'Liberation Mono',monospace;font-size:2.800px;line-height:3.3px;white-space:pre;opacity:1">    <span style="color:#9cdcfe">background-color</span><span style="color:#cccccc">:</span> <span style="color:#dcdcaa">var</span><span style="color:#ffd700">(</span><span style="color:#9cdcfe">--c-background-05</span><span style="color:#ffd700">)</span></div>
<div style="position:absolute;left:0.30px;top:122.35px;font-family:'Liberation Mono',monospace;font-size:2.800px;line-height:3.3px;white-space:pre;opacity:1">    <span style="color:#9cdcfe">width</span><span style="color:#cccccc">:</span> <span style="color:#b5cea8">100%</span></div>
<div style="position:absolute;left:0.30px;top:125.65px;font-family:'Liberation Mono',monospace;font-size:2.800px;line-height:3.3px;white-space:pre;opacity:1">    <span style="color:#9cdcfe">border-radius</span><span style="color:#cccccc">:</span> <span style="color:#dcdcaa">var</span><span style="color:#ffd700">(</span><span style="color:#9cdcfe">--br-l</span><span style="color:#ffd700">)</span></div>
<div style="position:absolute;left:0.30px;top:128.95px;font-family:'Liberation Mono',monospace;font-size:2.800px;line-height:3.3px;white-space:pre;opacity:1">    <span style="color:#9cdcfe">max-width</span><span style="color:#cccccc">:</span> <span style="color:#dcdcaa">var</span><span style="color:#ffd700">(</span><span style="color:#9cdcfe">--bp-xl</span><span style="color:#ffd700">)</span></div>
<div style="position:absolute;left:0.30px;top:132.25px;font-family:'Liberation Mono',monospace;font-size:2.800px;line-height:3.3px;white-space:pre;opacity:1">    <span style="color:#9cdcfe">margin</span><span style="color:#cccccc">:</span> <span style="color:#b5cea8">0</span> <span style="color:#ce9178">auto</span></div>
<div style="position:absolute;left:0.30px;top:138.85px;font-family:'Liberation Mono',monospace;font-size:2.800px;line-height:3.3px;white-space:pre;opacity:1">    <span style="color:#d4d4d4">&amp;</span><span style="color:#d7ba7d">.--track</span></div>
<div style="position:absolute;left:0.30px;top:142.15px;font-family:'Liberation Mono',monospace;font-size:2.800px;line-height:3.3px;white-space:pre;opacity:1">      <span style="color:#9cdcfe">padding</span><span style="color:#cccccc">:</span> <span style="color:#dcdcaa">var</span><span style="color:#ffd700">(</span><span style="color:#9cdcfe">--cs-l</span><span style="color:#ffd700">)</span> <span style="color:#b5cea8">0</span></div>
<div style="position:absolute;left:0.30px;top:148.75px;font-family:'Liberation Mono',monospace;font-size:2.800px;line-height:3.3px;white-space:pre;opacity:1">  <span style="color:#d4d4d4">&amp;</span><span style="color:#9cdcfe">__info</span></div>
<div style="position:absolute;left:0.30px;top:152.05px;font-family:'Liberation Mono',monospace;font-size:2.800px;line-height:3.3px;white-space:pre;opacity:1">    <span style="color:#9cdcfe">margin</span><span style="color:#cccccc">:</span> <span style="color:#dcdcaa">var</span><span style="color:#ffd700">(</span><span style="color:#9cdcfe">--ls-m</span><span style="color:#ffd700">)</span> <span style="color:#b5cea8">0</span> <span style="color:#b5cea8">0</span></div>
<div style="position:absolute;left:0.30px;top:158.65px;font-family:'Liberation Mono',monospace;font-size:2.800px;line-height:3.3px;white-space:pre;opacity:1">    <span style="color:#d4d4d4">+</span><span style="color:#dcdcaa">media-query-min($bp.md)</span></div>
<div style="position:absolute;left:0.30px;top:161.95px;font-family:'Liberation Mono',monospace;font-size:2.800px;line-height:3.3px;white-space:pre;opacity:1">      <span style="color:#9cdcfe">--grid-column-gap</span><span style="color:#cccccc">:</span> <span style="color:#dcdcaa">var</span><span style="color:#ffd700">(</span><span style="color:#9cdcfe">--ls-m</span><span style="color:#ffd700">)</span></div>
<div style="position:absolute;left:0.30px;top:165.25px;font-family:'Liberation Mono',monospace;font-size:2.800px;line-height:3.3px;white-space:pre;opacity:1">    <span style="color:#d7ba7d">div &gt; *</span></div>
<div style="position:absolute;left:0.30px;top:168.55px;font-family:'Liberation Mono',monospace;font-size:2.800px;line-height:3.3px;white-space:pre;opacity:1">      <span style="color:#9cdcfe">display</span><span style="color:#cccccc">:</span> <span style="color:#ce9178">flex</span></div>
<div style="position:absolute;left:0.30px;top:171.85px;font-family:'Liberation Mono',monospace;font-size:2.800px;line-height:3.3px;white-space:pre;opacity:1">      <span style="color:#9cdcfe">flex-direction</span><span style="color:#cccccc">:</span> <span style="color:#ce9178">column</span></div>
<div style="position:absolute;left:0.30px;top:175.15px;font-family:'Liberation Mono',monospace;font-size:2.800px;line-height:3.3px;white-space:pre;opacity:1">      <span style="color:#9cdcfe">width</span><span style="color:#cccccc">:</span> <span style="color:#b5cea8">100%</span></div>
<div style="position:absolute;left:0.30px;top:178.45px;font-family:'Liberation Mono',monospace;font-size:2.800px;line-height:3.3px;white-space:pre;opacity:1">      <span style="color:#9cdcfe">height</span><span style="color:#cccccc">:</span> <span style="color:#b5cea8">100%</span></div>
<div style="position:absolute;left:0.30px;top:185.05px;font-family:'Liberation Mono',monospace;font-size:2.800px;line-height:3.3px;white-space:pre;opacity:1">  <span style="color:#d4d4d4">&amp;</span><span style="color:#9cdcfe">__nav</span></div>
<div style="position:absolute;left:0.30px;top:191.65px;font-family:'Liberation Mono',monospace;font-size:2.800px;line-height:3.3px;white-space:pre;opacity:1">    <span style="color:#d4d4d4">&amp;</span><span style="color:#9cdcfe">__subheading</span></div>
<div style="position:absolute;left:0.30px;top:194.95px;font-family:'Liberation Mono',monospace;font-size:2.800px;line-height:3.3px;white-space:pre;opacity:1">      <span style="color:#9cdcfe">position</span><span style="color:#cccccc">:</span> <span style="color:#ce9178">absolute</span></div>
<div style="position:absolute;left:0.30px;top:198.25px;font-family:'Liberation Mono',monospace;font-size:2.800px;line-height:3.3px;white-space:pre;opacity:1">      <span style="color:#9cdcfe">width</span><span style="color:#cccccc">:</span> <span style="color:#b5cea8">100%</span></div>
<div style="position:absolute;left:0.30px;top:201.55px;font-family:'Liberation Mono',monospace;font-size:2.800px;line-height:3.3px;white-space:pre;opacity:1">      <span style="color:#9cdcfe">opacity</span><span style="color:#cccccc">:</span> <span style="color:#b5cea8">0</span></div>
<div style="position:absolute;left:0.30px;top:204.85px;font-family:'Liberation Mono',monospace;font-size:2.800px;line-height:3.3px;white-space:pre;opacity:1">      <span style="color:#9cdcfe">transition</span><span style="color:#cccccc">:</span> <span style="color:#ce9178">opacity</span> <span style="color:#b5cea8">.67s</span></div>
<div style="position:absolute;left:0.30px;top:208.15px;font-family:'Liberation Mono',monospace;font-size:2.800px;line-height:3.3px;white-space:pre;opacity:1">      <span style="color:#9cdcfe">margin</span><span style="color:#cccccc">:</span> <span style="color:#dcdcaa">var</span><span style="color:#ffd700">(</span><span style="color:#9cdcfe">--ls-s</span><span style="color:#ffd700">)</span> <span style="color:#b5cea8">0</span> <span style="color:#b5cea8">0</span> <span style="color:#b5cea8">0</span></div>
<div style="position:absolute;left:0.30px;top:211.45px;font-family:'Liberation Mono',monospace;font-size:2.800px;line-height:3.3px;white-space:pre;opacity:1">      <span style="color:#9cdcfe">background</span><span style="color:#cccccc">:</span> <span style="color:#dcdcaa">var</span><span style="color:#ffd700">(</span><span style="color:#9cdcfe">--c-background-05</span><span style="color:#ffd700">)</span></div>
<div style="position:absolute;left:0.30px;top:218.05px;font-family:'Liberation Mono',monospace;font-size:2.800px;line-height:3.3px;white-space:pre;opacity:1">      <span style="color:#d4d4d4">&amp;</span><span style="color:#d7ba7d">.active</span></div>
<div style="position:absolute;left:0.30px;top:221.35px;font-family:'Liberation Mono',monospace;font-size:2.800px;line-height:3.3px;white-space:pre;opacity:1">        <span style="color:#9cdcfe">opacity</span><span style="color:#cccccc">:</span> <span style="color:#b5cea8">1</span></div>
<div style="position:absolute;left:0.30px;top:227.95px;font-family:'Liberation Mono',monospace;font-size:2.800px;line-height:3.3px;white-space:pre;opacity:1">      <span style="color:#d7ba7d">h3</span></div>
<div style="position:absolute;left:0.30px;top:231.25px;font-family:'Liberation Mono',monospace;font-size:2.800px;line-height:3.3px;white-space:pre;opacity:1">        <span style="color:#9cdcfe">border</span><span style="color:#cccccc">:</span> <span style="color:#b5cea8">1px</span> <span style="color:#ce9178">solid</span> <span style="color:#dcdcaa">var</span><span style="color:#ffd700">(</span><span style="color:#9cdcfe">--c-line-05</span><span style="color:#ffd700">)</span></div>
<div style="position:absolute;left:0.30px;top:234.55px;font-family:'Liberation Mono',monospace;font-size:2.800px;line-height:3.3px;white-space:pre;opacity:1">        <span style="color:#9cdcfe">box-sizing</span><span style="color:#cccccc">:</span> <span style="color:#ce9178">border-box</span></div>
<div style="position:absolute;left:0.30px;top:237.85px;font-family:'Liberation Mono',monospace;font-size:2.800px;line-height:3.3px;white-space:pre;opacity:1">        <span style="color:#9cdcfe">box-shadow</span><span style="color:#cccccc">:</span> <span style="color:#b5cea8">0px</span> <span style="color:#b5cea8">4px</span> <span style="color:#b5cea8">20px</span> <span style="color:#dcdcaa">rgba</span><span style="color:#ffd700">(</span><span style="color:#b5cea8">0</span><span style="color:#ce9178">,</span> <span style="color:#b5cea8">0</span><span style="color:#ce9178">,</span> <span style="color:#b5cea8">0</span><span style="color:#ce9178">,</span> <span style="color:#b5cea8">.05</span><span style="color:#ffd700">)</span></div>
<div style="position:absolute;left:0.30px;top:241.15px;font-family:'Liberation Mono',monospace;font-size:2.800px;line-height:3.3px;white-space:pre;opacity:1">        <span style="color:#9cdcfe">border-radius</span><span style="color:#cccccc">:</span> <span style="color:#dcdcaa">var</span><span style="color:#ffd700">(</span><span style="color:#9cdcfe">--br-l</span><span style="color:#ffd700">)</span></div>
<div style="position:absolute;left:0.30px;top:244.45px;font-family:'Liberation Mono',monospace;font-size:2.800px;line-height:3.3px;white-space:pre;opacity:1">        <span style="color:#9cdcfe">padding</span><span style="color:#cccccc">:</span> <span style="color:#dcdcaa">var</span><span style="color:#ffd700">(</span><span style="color:#9cdcfe">--cs-s</span><span style="color:#ffd700">)</span> <span style="color:#dcdcaa">var</span><span style="color:#ffd700">(</span><span style="color:#9cdcfe">--cs-m</span><span style="color:#ffd700">)</span></div>
<div style="position:absolute;left:0.30px;top:247.75px;font-family:'Liberation Mono',monospace;font-size:2.800px;line-height:3.3px;white-space:pre;opacity:1">        <span style="color:#9cdcfe">display</span><span style="color:#cccccc">:</span> <span style="color:#ce9178">inline-block</span></div>
<div style="position:absolute;left:0.30px;top:254.35px;font-family:'Liberation Mono',monospace;font-size:2.800px;line-height:3.3px;white-space:pre;opacity:1">        <span style="color:#d4d4d4">+</span><span style="color:#dcdcaa">media-query($bp.sm)</span></div>
<div style="position:absolute;left:0.30px;top:257.65px;font-family:'Liberation Mono',monospace;font-size:2.800px;line-height:3.3px;white-space:pre;opacity:1">          <span style="color:#9cdcfe">font-size</span><span style="color:#cccccc">:</span> <span style="color:#dcdcaa">var</span><span style="color:#ffd700">(</span><span style="color:#9cdcfe">--fs-m</span><span style="color:#ffd700">)</span></div>
<div style="position:absolute;left:0.30px;top:264.25px;font-family:'Liberation Mono',monospace;font-size:2.800px;line-height:3.3px;white-space:pre;opacity:1">    <span style="color:#d4d4d4">&amp;</span><span style="color:#9cdcfe">__heading</span></div>
<div style="position:absolute;left:0.30px;top:267.55px;font-family:'Liberation Mono',monospace;font-size:2.800px;line-height:3.3px;white-space:pre;opacity:1">      <span style="color:#9cdcfe">min-height</span><span style="color:#cccccc">:</span> <span style="color:#dcdcaa">var</span><span style="color:#ffd700">(</span><span style="color:#9cdcfe">--ls-xxl</span><span style="color:#ffd700">)</span></div>
<div style="position:absolute;left:0.30px;top:270.85px;font-family:'Liberation Mono',monospace;font-size:2.800px;line-height:3.3px;white-space:pre;opacity:1">      <span style="color:#9cdcfe">margin</span><span style="color:#cccccc">:</span> <span style="color:#b5cea8">0</span> <span style="color:#b5cea8">0</span> <span style="color:#dcdcaa">var</span><span style="color:#ffd700">(</span><span style="color:#9cdcfe">--ls-xl</span><span style="color:#ffd700">)</span></div>
<div style="position:absolute;left:0.30px;top:274.15px;font-family:'Liberation Mono',monospace;font-size:2.800px;line-height:3.3px;white-space:pre;opacity:1">      <span style="color:#9cdcfe">text-align</span><span style="color:#cccccc">:</span> <span style="color:#ce9178">center</span></div>
<div style="position:absolute;left:0.30px;top:277.45px;font-family:'Liberation Mono',monospace;font-size:2.800px;line-height:3.3px;white-space:pre;opacity:1">      <span style="color:#9cdcfe">position</span><span style="color:#cccccc">:</span> <span style="color:#ce9178">relative</span></div>
<div style="position:absolute;left:0.30px;top:284.05px;font-family:'Liberation Mono',monospace;font-size:2.800px;line-height:3.3px;white-space:pre;opacity:1">      <span style="color:#d4d4d4">+</span><span style="color:#dcdcaa">media-query($bp.sm)</span></div>
<div style="position:absolute;left:0.30px;top:287.35px;font-family:'Liberation Mono',monospace;font-size:2.800px;line-height:3.3px;white-space:pre;opacity:1">        <span style="color:#9cdcfe">min-height</span><span style="color:#cccccc">:</span> <span style="color:#dcdcaa">var</span><span style="color:#ffd700">(</span><span style="color:#9cdcfe">--ls-xxl</span><span style="color:#ffd700">)</span></div>
<div style="position:absolute;left:0.30px;top:290.65px;font-family:'Liberation Mono',monospace;font-size:2.800px;line-height:3.3px;white-space:pre;opacity:1">        <span style="color:#9cdcfe">margin</span><span style="color:#cccccc">:</span> <span style="color:#b5cea8">0</span> <span style="color:#b5cea8">0</span> <span style="color:#dcdcaa">var</span><span style="color:#ffd700">(</span><span style="color:#9cdcfe">--ls-xxl</span><span style="color:#ffd700">)</span></div>
<div style="position:absolute;left:0.30px;top:297.25px;font-family:'Liberation Mono',monospace;font-size:2.800px;line-height:3.3px;white-space:pre;opacity:1">  <span style="color:#d4d4d4">&amp;</span><span style="color:#9cdcfe">__logo</span></div>
<div style="position:absolute;left:0.30px;top:300.55px;font-family:'Liberation Mono',monospace;font-size:2.800px;line-height:3.3px;white-space:pre;opacity:1">    <span style="color:#9cdcfe">text-decoration</span><span style="color:#cccccc">:</span> <span style="color:#ce9178">none</span></div>
<div style="position:absolute;left:0.30px;top:303.85px;font-family:'Liberation Mono',monospace;font-size:2.800px;line-height:3.3px;white-space:pre;opacity:1">    <span style="color:#9cdcfe">display</span><span style="color:#cccccc">:</span> <span style="color:#ce9178">flex</span></div>
<div style="position:absolute;left:0.30px;top:307.15px;font-family:'Liberation Mono',monospace;font-size:2.800px;line-height:3.3px;white-space:pre;opacity:1">    <span style="color:#9cdcfe">width</span><span style="color:#cccccc">:</span> <span style="color:#b5cea8">100%</span></div>
<div style="position:absolute;left:0.30px;top:310.45px;font-family:'Liberation Mono',monospace;font-size:2.800px;line-height:3.3px;white-space:pre;opacity:1">    <span style="color:#9cdcfe">justify-content</span><span style="color:#cccccc">:</span> <span style="color:#ce9178">space-between</span></div>
<div style="position:absolute;left:0.30px;top:313.75px;font-family:'Liberation Mono',monospace;font-size:2.800px;line-height:3.3px;white-space:pre;opacity:1">    <span style="color:#9cdcfe">padding</span><span style="color:#cccccc">:</span> <span style="color:#b5cea8">0</span></div>
<div style="position:absolute;left:0.30px;top:317.05px;font-family:'Liberation Mono',monospace;font-size:2.800px;line-height:3.3px;white-space:pre;opacity:1">    <span style="color:#9cdcfe">margin</span><span style="color:#cccccc">:</span> <span style="color:#b5cea8">0</span></div>
<div style="position:absolute;left:0.30px;top:320.35px;font-family:'Liberation Mono',monospace;font-size:2.800px;line-height:3.3px;white-space:pre;opacity:1">    <span style="color:#9cdcfe">flex-wrap</span><span style="color:#cccccc">:</span> <span style="color:#ce9178">wrap</span></div>
<div style="position:absolute;left:0.30px;top:323.65px;font-family:'Liberation Mono',monospace;font-size:2.800px;line-height:3.3px;white-space:pre;opacity:1">    <span style="color:#9cdcfe">align-items</span><span style="color:#cccccc">:</span> <span style="color:#ce9178">center</span></div>
<div style="position:absolute;left:0.30px;top:330.25px;font-family:'Liberation Mono',monospace;font-size:2.800px;line-height:3.3px;white-space:pre;opacity:1">    <span style="color:#d4d4d4">&amp;</span><span style="color:#9cdcfe">__item</span></div>
<div style="position:absolute;left:0.30px;top:333.55px;font-family:'Liberation Mono',monospace;font-size:2.800px;line-height:3.3px;white-space:pre;opacity:1">      <span style="color:#9cdcfe">margin</span><span style="color:#cccccc">:</span> <span style="color:#dcdcaa">var</span><span style="color:#ffd700">(</span><span style="color:#9cdcfe">--cs-l</span><span style="color:#ffd700">)</span> <span style="color:#dcdcaa">var</span><span style="color:#ffd700">(</span><span style="color:#9cdcfe">--cs-m</span><span style="color:#ffd700">)</span></div>
<div style="position:absolute;left:0.30px;top:336.85px;font-family:'Liberation Mono',monospace;font-size:2.800px;line-height:3.3px;white-space:pre;opacity:1">      <span style="color:#d7ba7d">img</span></div>
<div style="position:absolute;left:0.30px;top:340.15px;font-family:'Liberation Mono',monospace;font-size:2.800px;line-height:3.3px;white-space:pre;opacity:1">        <span style="color:#d4d4d4">+</span><span style="color:#dcdcaa">media-query($bp.sm)</span></div>
<div style="position:absolute;left:0.30px;top:343.45px;font-family:'Liberation Mono',monospace;font-size:2.800px;line-height:3.3px;white-space:pre;opacity:1">          <span style="color:#9cdcfe">width</span><span style="color:#cccccc">:</span> <span style="color:#dcdcaa">var</span><span style="color:#ffd700">(</span><span style="color:#9cdcfe">--ls-xl</span><span style="color:#ffd700">)</span></div>
</div>
<svg style="position:absolute;left:0;top:0" width="3200" height="1800">
<path d="M830.5,111 H802 M813,100 L802,111 L813,122" fill="none" stroke="#cccccc" stroke-width="2.4" stroke-linecap="butt" stroke-linejoin="miter" />
<path d="M863,111 H891.5 M880.5,100 L891.5,111 L880.5,122" fill="none" stroke="#868686" stroke-width="2.4" stroke-linecap="butt" stroke-linejoin="miter" />
<circle cx="1245.50" cy="104.00" r="9.50" fill="none" stroke="#cccccc" stroke-width="2.4"/>
<path d="M1238.8,110.8 L1225.5,125.5" fill="none" stroke="#cccccc" stroke-width="2.4" stroke-linecap="butt" stroke-linejoin="miter" />
<path d="M1911.8,118.5 C1911.8,112 1915,109.5 1917.5,109 L1944.5,109 C1947,109.5 1950,112 1950,118.5 C1950,124.5 1940,127.3 1931,127.3 C1922,127.3 1911.8,124.5 1911.8,118.5 Z" fill="#cccccc"/>
<path d="M1919.5,110.5 L1942.5,110.5 L1942.5,120.5 C1938,123 1924,123 1919.5,120.5 Z" fill="#181818"/>
<path d="M1917.5,100 C1917.5,95.5 1921,95 1924.5,95 C1929,95 1931,96 1931,100 L1931,104 C1931,107.5 1928,108.5 1924,108.5 C1919,108.5 1917.5,107 1917.5,104 Z" fill="none" stroke="#cccccc" stroke-width="3.2" stroke-linecap="butt" stroke-linejoin="miter" />
<path d="M1931,100 C1931,96 1933,95 1937.5,95 C1941,95 1944.5,95.5 1944.5,100 L1944.5,104 C1944.5,107 1943,108.5 1938,108.5 C1934,108.5 1931,107.5 1931,104 Z" fill="none" stroke="#cccccc" stroke-width="3.2" stroke-linecap="butt" stroke-linejoin="miter" />
<rect x="1924.8" y="113" width="4" height="7" rx="2" fill="#cccccc"/><rect x="1933.1" y="113" width="4" height="7" rx="2" fill="#cccccc"/>
<path d="M1960.5,106.5 L1969,115 L1977.5,106.5" fill="none" stroke="#cccccc" stroke-width="2.0" stroke-linecap="butt" stroke-linejoin="miter" />
<rect x="2385.3" y="96.9" width="11.8" height="26.5" rx="2.5" fill="none" stroke="#cccccc" stroke-width="2.4"/>
<rect x="2404.2" y="97.1" width="9.9" height="9.5" rx="2.3" fill="none" stroke="#cccccc" stroke-width="2.4"/>
<rect x="2404.2" y="113.7" width="9.9" height="9.7" rx="2.3" fill="none" stroke="#cccccc" stroke-width="2.4"/>
<rect x="2445" y="94.8" width="30.4" height="30.9" rx="3" fill="none" stroke="#cccccc" stroke-width="2.4"/>
<path d="M2448,94.8 H2458 V125.7 H2448 Q2445,125.7 2445,122.7 V97.8 Q2445,94.8 2448,94.8 Z" fill="#cccccc"/>
<rect x="2506.7" y="94.8" width="30.9" height="30.9" rx="3" fill="none" stroke="#cccccc" stroke-width="2.4"/>
<path d="M2506.7,114.8 H2537.6 V122.7 Q2537.6,125.7 2534.6,125.7 H2509.7 Q2506.7,125.7 2506.7,122.7 Z" fill="#cccccc"/>
<rect x="2568.7" y="94.8" width="30.6" height="30.9" rx="3" fill="none" stroke="#cccccc" stroke-width="2.4"/>
<path d="M2587.5,94.8 V125.7" fill="none" stroke="#cccccc" stroke-width="2.4" stroke-linecap="butt" stroke-linejoin="miter" />
<path d="M189.5,182.9 H209.7 L218.5,191.7 V219.2 L215.4,222.3 H189.5 L186.4,219.2 V186 Z M207.9,183 V194 H218.5" fill="none" stroke="#d7d7d7" stroke-width="3.5" stroke-linecap="butt" stroke-linejoin="miter" />
<path d="M186.4,197.2 H175.3 L172.2,200.3 V233.4 L175.3,236.5 H200.9 L204,233.4 V222.3" fill="none" stroke="#d7d7d7" stroke-width="3.5" stroke-linecap="butt" stroke-linejoin="miter" />
<circle cx="204.10" cy="315.70" r="17.70" fill="none" stroke="#868686" stroke-width="3.5"/>
<path d="M190.5,330 L171.9,351" fill="none" stroke="#868686" stroke-width="3.5" stroke-linecap="butt" stroke-linejoin="miter" />
<circle cx="184.00" cy="418.90" r="7.10" fill="none" stroke="#868686" stroke-width="3.5"/>
<circle cx="208.90" cy="429.50" r="7.10" fill="none" stroke="#868686" stroke-width="3.5"/>
<circle cx="184.00" cy="458.00" r="7.10" fill="none" stroke="#868686" stroke-width="3.5"/>
<path d="M184,426 V450.9" fill="none" stroke="#868686" stroke-width="3.5" stroke-linecap="butt" stroke-linejoin="miter" />
<path d="M184,450 C184,445 188,443.5 193,443.5 H199 C204,443.5 207.5,441 208.9,436.6" fill="none" stroke="#868686" stroke-width="3.5" stroke-linecap="butt" stroke-linejoin="miter" />
<path d="M187.7,550.7 V526.1 L222.6,548.1 L200.4,563.1" fill="none" stroke="#868686" stroke-width="3.5" stroke-linecap="butt" stroke-linejoin="miter" />
<path d="M176,562 C176,557.5 178.5,555.7 182.1,555.7 C185.7,555.7 188.2,557.5 188.2,562" fill="none" stroke="#868686" stroke-width="3.2" stroke-linecap="butt" stroke-linejoin="miter" />
<path d="M174.5,563.1 H189.8 M175.3,563.1 V569 C175.3,574.5 178,578.5 182.1,578.5 C186.2,578.5 188.9,574.5 188.9,569 V563.1" fill="none" stroke="#868686" stroke-width="3.2" stroke-linecap="butt" stroke-linejoin="miter" />
<path d="M170.3,558.3 L175,562.5 M194,558.3 L189.3,562.5 M168.3,569 H175 M196,569 H189.3 M170.3,580.5 L175,576 M194,580.5 L189.3,576" fill="none" stroke="#868686" stroke-width="3.0" stroke-linecap="butt" stroke-linejoin="miter" />
<path d="M169.8,653.8 L172.8,650.8 H188.1 L191.1,653.8 V672.2 H212.4 V690.4 L209.4,693.4 H172.8 L169.8,690.4 Z M169.8,672.2 H191.1 V693.4" fill="none" stroke="#868686" stroke-width="3.5" stroke-linecap="butt" stroke-linejoin="miter" />
<path d="M204.8,640.1 H220.1 L223.1,643.1 V658.3 L220.1,661.3 H204.8 L201.8,658.3 V643.1 Z" fill="none" stroke="#868686" stroke-width="3.5" stroke-linecap="butt" stroke-linejoin="miter" />
<path d="M191,797 H173.9 Q170.9,797 170.9,794 V763 Q170.9,760 173.9,760 H216.1 Q219.1,760 219.1,763 V780.2" fill="none" stroke="#868686" stroke-width="3.5" stroke-linecap="butt" stroke-linejoin="miter" />
<path d="M191,797 V804.8 H180.2 M191,804.8 H194.7" fill="none" stroke="#868686" stroke-width="3.5" stroke-linecap="butt" stroke-linejoin="miter" />
<circle cx="210.20" cy="795.50" r="13.10" fill="none" stroke="#868686" stroke-width="3.5"/>
<path d="M205,793 L209.3,797.6 L205,802.2 M217,789.5 L212.6,793.8 L217,798.2" fill="none" stroke="#868686" stroke-width="2.6" stroke-linecap="butt" stroke-linejoin="miter" />
<path d="M185.9,872.7 H207.1 M190.9,874 V889 L178.3,914.2 Q176.6,918.7 181,918.7 H211.6 Q216,918.7 214.3,914.2 L202.1,889 V874 M183,904.8 H209" fill="none" stroke="#868686" stroke-width="3.5" stroke-linecap="butt" stroke-linejoin="miter" />
<circle cx="196.50" cy="1009.50" r="27.00" fill="none" stroke="#868686" stroke-width="3.3"/>
<circle cx="192.10" cy="995.80" r="5.20" fill="#868686" stroke="none" stroke-width="0"/>
<circle cx="206.60" cy="1010.60" r="5.30" fill="#868686" stroke="none" stroke-width="0"/>
<circle cx="192.10" cy="1023.80" r="5.20" fill="#868686" stroke="none" stroke-width="0"/>
<path d="M192.1,996 V1023.8 M192.1,996 L206.6,1010.6" fill="none" stroke="#868686" stroke-width="3.6" stroke-linecap="butt" stroke-linejoin="miter" />
<circle cx="178.50" cy="1123.00" r="3.20" fill="#868686" stroke="none" stroke-width="0"/>
<circle cx="197.00" cy="1123.00" r="3.20" fill="#868686" stroke="none" stroke-width="0"/>
<circle cx="215.50" cy="1123.00" r="3.20" fill="#868686" stroke="none" stroke-width="0"/>
<circle cx="196.30" cy="1404.80" r="26.80" fill="none" stroke="#868686" stroke-width="3.4"/>
<circle cx="196.30" cy="1399.50" r="11.30" fill="none" stroke="#868686" stroke-width="3.4"/>
<path d="M179.5,1423.8 C182,1415 188.5,1410.8 196.3,1410.8 C204.1,1410.8 210.6,1415 213.1,1423.8" fill="none" stroke="#868686" stroke-width="3.4" stroke-linecap="butt" stroke-linejoin="miter" />
<path d="M189.84,1503.37 L191.26,1492.11 L200.74,1492.11 L202.16,1503.37 L202.70,1503.59 L211.66,1496.64 L218.36,1503.34 L211.41,1512.30 L211.63,1512.84 L222.89,1514.26 L222.89,1523.74 L211.63,1525.16 L211.41,1525.70 L218.36,1534.66 L211.66,1541.36 L202.70,1534.41 L202.16,1534.63 L200.74,1545.89 L191.26,1545.89 L189.84,1534.63 L189.30,1534.41 L180.34,1541.36 L173.64,1534.66 L180.59,1525.70 L180.37,1525.16 L169.11,1523.74 L169.11,1514.26 L180.37,1512.84 L180.59,1512.30 L173.64,1503.34 L180.34,1496.64 L189.30,1503.59 Z" fill="none" stroke="#868686" stroke-width="3.4" stroke-linecap="butt" stroke-linejoin="miter" />
<circle cx="196.00" cy="1519.00" r="6.80" fill="none" stroke="#868686" stroke-width="3.4"/>
<circle cx="939.70" cy="194.50" r="2.60" fill="#cccccc" stroke="none" stroke-width="0"/>
<circle cx="949.30" cy="194.50" r="2.60" fill="#cccccc" stroke="none" stroke-width="0"/>
<circle cx="958.90" cy="194.50" r="2.60" fill="#cccccc" stroke="none" stroke-width="0"/>
<path d="M266.5,256.6 L277.4,267.4 L288.3,256.6" fill="none" stroke="#cccccc" stroke-width="2.2" stroke-linecap="butt" stroke-linejoin="miter" />
<path d="M774.2,275.7 H764.6 V246.7 H779.8 L788.3,254.4 V259.5 M779.8,246.7 V256.5 H788.3 M788.1,265 V281.3 M780.2,273 H796.4" fill="none" stroke="#cccccc" stroke-width="2.5" stroke-linecap="butt" stroke-linejoin="miter" />
<path d="M831.9,275.7 H819 V246.7 H831 L833.6,248.8 H849.4 V259.9 M819,256.5 H830.1 L833.5,253.3 H849.4 M845.1,265 V281.3 M837,273 H853.2" fill="none" stroke="#cccccc" stroke-width="2.5" stroke-linecap="butt" stroke-linejoin="miter" />
<path d="M895.9,249.7 A13.2,13.2 0 1 1 881.4,254.4" fill="none" stroke="#cccccc" stroke-width="2.5" stroke-linecap="butt" stroke-linejoin="miter" />
<path d="M877.1,248.8 H885.7 V256.9" fill="none" stroke="#cccccc" stroke-width="2.5" stroke-linecap="butt" stroke-linejoin="miter" />
<path d="M942.4,255.2 V253.5 Q942.4,250.5 945.4,250.5 H958.7 Q961.7,250.5 961.7,253.5 V265 Q961.7,268 958.7,268 H955.3" fill="none" stroke="#cccccc" stroke-width="2.5" stroke-linecap="butt" stroke-linejoin="miter" />
<rect x="936.8" y="257.7" width="17.6" height="17.6" rx="3" fill="none" stroke="#cccccc" stroke-width="2.5"/>
<path d="M939.5,265.9 H951" fill="none" stroke="#cccccc" stroke-width="2.5" stroke-linecap="butt" stroke-linejoin="miter" />
<path d="M297.5,310.8 L308.4,321.6 L319.3,310.8" fill="none" stroke="#cccccc" stroke-width="2.2" stroke-linecap="butt" stroke-linejoin="miter" />
<path d="M316.5,363.1 L327.4,373.9 L338.3,363.1" fill="none" stroke="#cccccc" stroke-width="2.2" stroke-linecap="butt" stroke-linejoin="miter" />
<path d="M335.5,416.4 L346.4,427.2 L357.3,416.4" fill="none" stroke="#cccccc" stroke-width="2.2" stroke-linecap="butt" stroke-linejoin="miter" />
<path d="M361.5,494.5 L372.2,505.4 L361.5,516.3" fill="none" stroke="#cccccc" stroke-width="2.2" stroke-linecap="butt" stroke-linejoin="miter" />
<clipPath id="cjs"><rect x="253" y="447" width="748" height="30"/></clipPath>
<g clip-path="url(#cjs)"><path d="M361.5,442.2 L372.2,453.1 L361.5,464.0" fill="none" stroke="#cccccc" stroke-width="2.2" stroke-linecap="butt" stroke-linejoin="miter" /></g>
<path d="M354.5,554.8 L365.4,565.6 L376.3,554.8" fill="none" stroke="#cccccc" stroke-width="2.2" stroke-linecap="butt" stroke-linejoin="miter" />
<path d="M380.7,598.8 L391.4,609.7 L380.7,620.6" fill="none" stroke="#cccccc" stroke-width="2.2" stroke-linecap="butt" stroke-linejoin="miter" />
<path d="M380.7,651.0 L391.4,661.9 L380.7,672.8" fill="none" stroke="#cccccc" stroke-width="2.2" stroke-linecap="butt" stroke-linejoin="miter" />
<path d="M373.7,711.3 L384.6,722.1 L395.5,711.3" fill="none" stroke="#cccccc" stroke-width="2.2" stroke-linecap="butt" stroke-linejoin="miter" />
<path d="M380.9,1174.2 L391.6,1185.1 L380.9,1196.0" fill="none" stroke="#cccccc" stroke-width="2.2" stroke-linecap="butt" stroke-linejoin="miter" />
<path d="M335.2,1339.7 L346.1,1350.5 L357.0,1339.7" fill="none" stroke="#cccccc" stroke-width="2.2" stroke-linecap="butt" stroke-linejoin="miter" />
<path d="M354.2,1391.5 L365.1,1402.3 L376.0,1391.5" fill="none" stroke="#cccccc" stroke-width="2.2" stroke-linecap="butt" stroke-linejoin="miter" />
<path d="M272.2,1487.3 L282.9,1498.2 L272.2,1509.1" fill="none" stroke="#cccccc" stroke-width="2.2" stroke-linecap="butt" stroke-linejoin="miter" />
<path d="M272.2,1540.0 L282.9,1550.9 L272.2,1561.8" fill="none" stroke="#cccccc" stroke-width="2.2" stroke-linecap="butt" stroke-linejoin="miter" />
<path d="M385.4,783.8 Q389.0,785.5 393.0,778.5 Q397.0,771.5 399.2,764.2 Q398.0,763.2 396.4,764.0 M415.1,748.8 Q411.0,747.5 406.3,755.5 Q401.8,763.0 401.9,767.6 Q402.6,770.0 404.6,768.6" fill="none" stroke="#8dc149" stroke-width="2.1" stroke-linecap="butt" stroke-linejoin="miter" stroke-linecap="round"/>
<path d="M385.4,836.1 Q389.0,837.8 393.0,830.8 Q397.0,823.8 399.2,816.5 Q398.0,815.5 396.4,816.3 M415.1,801.1 Q411.0,799.8 406.3,807.8 Q401.8,815.3 401.9,819.9 Q402.6,822.3 404.6,820.9" fill="none" stroke="#8dc149" stroke-width="2.1" stroke-linecap="butt" stroke-linejoin="miter" stroke-linecap="round"/>
<path d="M385.4,888.2 Q389.0,889.9 393.0,882.9 Q397.0,875.9 399.2,868.6 Q398.0,867.6 396.4,868.4 M415.1,853.2 Q411.0,851.9 406.3,859.9 Q401.8,867.4 401.9,872.0 Q402.6,874.4 404.6,873.0" fill="none" stroke="#8dc149" stroke-width="2.1" stroke-linecap="butt" stroke-linejoin="miter" stroke-linecap="round"/>
<path d="M385.4,940.4 Q389.0,942.1 393.0,935.1 Q397.0,928.1 399.2,920.8 Q398.0,919.8 396.4,920.6 M415.1,905.4 Q411.0,904.1 406.3,912.1 Q401.8,919.6 401.9,924.2 Q402.6,926.6 404.6,925.2" fill="none" stroke="#8dc149" stroke-width="2.1" stroke-linecap="butt" stroke-linejoin="miter" stroke-linecap="round"/>
<path d="M385.4,992.6 Q389.0,994.3 393.0,987.3 Q397.0,980.3 399.2,973.0 Q398.0,972.0 396.4,972.8 M415.1,957.6 Q411.0,956.3 406.3,964.3 Q401.8,971.8 401.9,976.4 Q402.6,978.8 404.6,977.4" fill="none" stroke="#8dc149" stroke-width="2.1" stroke-linecap="butt" stroke-linejoin="miter" stroke-linecap="round"/>
<path d="M385.4,1044.7 Q389.0,1046.4 393.0,1039.4 Q397.0,1032.4 399.2,1025.1 Q398.0,1024.1 396.4,1024.9 M415.1,1009.7 Q411.0,1008.4 406.3,1016.4 Q401.8,1023.9 401.9,1028.5 Q402.6,1030.9 404.6,1029.5" fill="none" stroke="#8dc149" stroke-width="2.1" stroke-linecap="butt" stroke-linejoin="miter" stroke-linecap="round"/>
<path d="M385.4,1097.3 Q389.0,1099.0 393.0,1092.0 Q397.0,1085.0 399.2,1077.7 Q398.0,1076.7 396.4,1077.5 M415.1,1062.3 Q411.0,1061.0 406.3,1069.0 Q401.8,1076.5 401.9,1081.1 Q402.6,1083.5 404.6,1082.1" fill="none" stroke="#8dc149" stroke-width="2.1" stroke-linecap="butt" stroke-linejoin="miter" stroke-linecap="round"/>
<path d="M385.4,1149.0 Q389.0,1150.7 393.0,1143.7 Q397.0,1136.7 399.2,1129.4 Q398.0,1128.4 396.4,1129.2 M415.1,1114.0 Q411.0,1112.7 406.3,1120.7 Q401.8,1128.2 401.9,1132.8 Q402.6,1135.2 404.6,1133.8" fill="none" stroke="#8dc149" stroke-width="2.1" stroke-linecap="butt" stroke-linejoin="miter" stroke-linecap="round"/>
<path d="M347.7,1306.4 Q351.3,1308.1 355.3,1301.1 Q359.3,1294.1 361.5,1286.8 Q360.3,1285.8 358.7,1286.6 M377.4,1271.4 Q373.3,1270.1 368.6,1278.1 Q364.1,1285.6 364.2,1290.2 Q364.9,1292.6 366.9,1291.2" fill="none" stroke="#8dc149" stroke-width="2.1" stroke-linecap="butt" stroke-linejoin="miter" stroke-linecap="round"/>
<text x="350" y="1247" font-family="Liberation Sans" font-weight="700" font-size="22" fill="#cbcb41" textLength="24" lengthAdjust="spacingAndGlyphs">JS</text>
<path d="M377.0,1439.0 L370.5,1447.5 L377.0,1456.0" fill="none" stroke="#e37933" stroke-width="2.6" stroke-linecap="butt" stroke-linejoin="miter" /><path d="M385.0,1439.0 L391.5,1447.5 L385.0,1456.0" fill="none" stroke="#e37933" stroke-width="2.6" stroke-linecap="butt" stroke-linejoin="miter" />
<path d="M1046.0,187.0 L1039.5,195.5 L1046.0,204.0" fill="none" stroke="#e37933" stroke-width="2.6" stroke-linecap="butt" stroke-linejoin="miter" /><path d="M1054.0,187.0 L1060.5,195.5 L1054.0,204.0" fill="none" stroke="#e37933" stroke-width="2.6" stroke-linecap="butt" stroke-linejoin="miter" />
<path d="M1356.4,211.8 Q1360.0,213.5 1364.0,206.5 Q1368.0,199.5 1370.2,192.2 Q1369.0,191.2 1367.4,192.0 M1386.1,176.8 Q1382.0,175.5 1377.3,183.5 Q1372.8,191.0 1372.9,195.6 Q1373.6,198.0 1375.6,196.6" fill="none" stroke="#8dc149" stroke-width="2.1" stroke-linecap="butt" stroke-linejoin="miter" stroke-linecap="round"/>
<path d="M1564,186 L1584,206 M1584,186 L1564,206" fill="none" stroke="#ffffff" stroke-width="2.4" stroke-linecap="butt" stroke-linejoin="miter" />
<path d="M1115.0,252.0 L1125.0,262.5 L1115.0,273.0" fill="none" stroke="#a9a9a9" stroke-width="2.0" stroke-linecap="butt" stroke-linejoin="miter" />
<path d="M1277.5,252.0 L1287.5,262.5 L1277.5,273.0" fill="none" stroke="#a9a9a9" stroke-width="2.0" stroke-linecap="butt" stroke-linejoin="miter" />
<path d="M1395.0,252.0 L1405.0,262.5 L1395.0,273.0" fill="none" stroke="#a9a9a9" stroke-width="2.0" stroke-linecap="butt" stroke-linejoin="miter" />
<path d="M1558.6,252.0 L1568.6,262.5 L1558.6,273.0" fill="none" stroke="#a9a9a9" stroke-width="2.0" stroke-linecap="butt" stroke-linejoin="miter" />
<path d="M1647.7,252.0 L1657.7,262.5 L1647.7,273.0" fill="none" stroke="#a9a9a9" stroke-width="2.0" stroke-linecap="butt" stroke-linejoin="miter" />
<path d="M1758.6,252.0 L1768.6,262.5 L1758.6,273.0" fill="none" stroke="#a9a9a9" stroke-width="2.0" stroke-linecap="butt" stroke-linejoin="miter" />
<path d="M1985.0,252.0 L1995.0,262.5 L1985.0,273.0" fill="none" stroke="#a9a9a9" stroke-width="2.0" stroke-linecap="butt" stroke-linejoin="miter" />
<path d="M1790.4,279.8 Q1794.0,281.5 1798.0,274.5 Q1802.0,267.5 1804.2,260.2 Q1803.0,259.2 1801.4,260.0 M1820.1,244.8 Q1816.0,243.5 1811.3,251.5 Q1806.8,259.0 1806.9,263.6 Q1807.6,266.0 1809.6,264.6" fill="none" stroke="#8dc149" stroke-width="2.1" stroke-linecap="butt" stroke-linejoin="miter" stroke-linecap="round"/>
<circle cx="2279.90" cy="193.30" r="10.60" fill="none" stroke="#cccccc" stroke-width="2.5"/>
<path d="M2255.5,193.3 H2268.9 M2291,193.3 H2294 M2264.2,185.4 L2256.3,193.3 L2264.2,201.1" fill="none" stroke="#cccccc" stroke-width="2.5" stroke-linecap="butt" stroke-linejoin="miter" />
<circle cx="2337.60" cy="193.30" r="10.60" fill="none" stroke="#868686" stroke-width="2.5"/>
<path d="M2319.8,193.3 H2327 M2348.2,193.3 H2355.4" fill="none" stroke="#868686" stroke-width="2.5" stroke-linecap="butt" stroke-linejoin="miter" />
<circle cx="2393.10" cy="193.30" r="10.60" fill="none" stroke="#868686" stroke-width="2.5"/>
<path d="M2379.2,193.3 H2382.5 M2403.7,193.3 H2416.5 M2408.9,185.4 L2416.8,193.3 L2408.9,201.1" fill="none" stroke="#868686" stroke-width="2.5" stroke-linecap="butt" stroke-linejoin="miter" />
<circle cx="2460.00" cy="194.50" r="18.00" fill="none" stroke="#cccccc" stroke-width="2.3"/>
<circle cx="2457.30" cy="185.00" r="3.60" fill="#cccccc" stroke="none" stroke-width="0"/>
<circle cx="2466.70" cy="194.80" r="3.60" fill="#cccccc" stroke="none" stroke-width="0"/>
<circle cx="2457.30" cy="203.90" r="3.60" fill="#cccccc" stroke="none" stroke-width="0"/>
<path d="M2457.3,185 V203.9 M2457.3,185 L2466.7,194.8" fill="none" stroke="#cccccc" stroke-width="2.3" stroke-linecap="butt" stroke-linejoin="miter" />
<rect x="2509.5" y="179.2" width="28.1" height="28.5" rx="2.2" fill="none" stroke="#cccccc" stroke-width="2.4"/>
<path d="M2523.3,179.2 V207.7" fill="none" stroke="#cccccc" stroke-width="2.4" stroke-linecap="butt" stroke-linejoin="miter" />
<circle cx="2571.90" cy="194.50" r="2.50" fill="#cccccc" stroke="none" stroke-width="0"/>
<circle cx="2583.70" cy="194.50" r="2.50" fill="#cccccc" stroke="none" stroke-width="0"/>
<circle cx="2595.60" cy="194.50" r="2.50" fill="#cccccc" stroke="none" stroke-width="0"/>
<path d="M1051,1390.7 H1066 M1060,1384.5 L1066.3,1390.7 L1060,1397" fill="none" stroke="#23d18b" stroke-width="3.0" stroke-linecap="butt" stroke-linejoin="miter" />
<path d="M1629.5,1391.5 L1633,1389 L1636.5,1393.5 L1645.5,1382 L1647.5,1384 L1636.5,1399 Z" fill="#23d18b" stroke="#23d18b" stroke-width="1.2" stroke-linejoin="round"/>
<path d="M169.9,1597 L179.4,1605.8 L169.9,1615.3 M189.6,1588.8 L180,1597.7 L189.6,1606.5" fill="none" stroke="#ffffff" stroke-width="2.0" stroke-linecap="butt" stroke-linejoin="miter" />
<circle cx="243.90" cy="1591.50" r="4.30" fill="none" stroke="#cccccc" stroke-width="1.9"/>
<circle cx="258.90" cy="1597.00" r="4.30" fill="none" stroke="#cccccc" stroke-width="1.9"/>
<circle cx="243.90" cy="1614.00" r="4.30" fill="none" stroke="#cccccc" stroke-width="1.9"/>
<path d="M243.9,1595.8 V1609.7 M243.9,1608 C243.9,1604 247,1603.5 251,1603.5 C255,1603.5 258.9,1603 258.9,1601.3" fill="none" stroke="#cccccc" stroke-width="1.9" stroke-linecap="butt" stroke-linejoin="miter" />
<path d="M387.2,1602 A12.3,12.3 0 0 1 411.8,1601 M411.8,1603.5 A12.3,12.3 0 0 1 387.2,1604.5" fill="none" stroke="#cccccc" stroke-width="1.9" stroke-linecap="butt" stroke-linejoin="miter" />
<path d="M407.3,1597.5 L411.8,1602.5 L416.3,1597.5 M382.7,1609 L387.2,1604 L391.7,1609" fill="none" stroke="#cccccc" stroke-width="1.9" stroke-linecap="butt" stroke-linejoin="miter" />
<circle cx="456.60" cy="1593.60" r="4.30" fill="none" stroke="#cccccc" stroke-width="1.9"/>
<circle cx="456.60" cy="1612.00" r="4.30" fill="none" stroke="#cccccc" stroke-width="1.9"/>
<circle cx="473.60" cy="1601.70" r="4.30" fill="none" stroke="#cccccc" stroke-width="1.9"/>
<path d="M456.6,1597.9 V1607.7 M456.6,1616.3 V1618 M464.7,1592.2 V1618 M473.6,1606 C473.6,1610 470,1611.5 464.7,1611.5" fill="none" stroke="#cccccc" stroke-width="1.9" stroke-linecap="butt" stroke-linejoin="miter" />
<path d="M551.7,1588.5 C544,1589.5 535,1596 528,1607.5 L537,1616.5 C547.5,1609 551.5,1600 551.7,1588.5 Z M533,1600.5 L523.5,1598 V1607.5 M543.5,1611 V1616.8 H536.5 M523.5,1612 V1616.8 H529" fill="none" stroke="#cccccc" stroke-width="1.9" stroke-linecap="butt" stroke-linejoin="miter" />
<circle cx="540.50" cy="1598.80" r="2.60" fill="#cccccc" stroke="none" stroke-width="0"/>
<g transform="translate(570.25,1601.95) rotate(-45)"><path d="M-19,0 H-12.5 M-7,-6.5 A6.5,6.5 0 0 0 -7,6.5 Z M-7,-3 H-2.5 M-7,3 H-2.5 M1.5,-6.5 H6.5 A6.5,6.5 0 0 1 6.5,6.5 H1.5 Z M13,0 H19" fill="none" stroke="#cccccc" stroke-width="1.9" stroke-linecap="butt" stroke-linejoin="miter" /></g>
<circle cx="798.90" cy="1602.70" r="13.00" fill="none" stroke="#cccccc" stroke-width="2.0"/>
<path d="M793,1596.8 L804.8,1608.6 M804.8,1596.8 L793,1608.6" fill="none" stroke="#cccccc" stroke-width="2.0" stroke-linecap="butt" stroke-linejoin="miter" />
<path d="M866.4,1589 L881,1614.2 H852 Z" fill="none" stroke="#cccccc" stroke-width="2.0" stroke-linecap="butt" stroke-linejoin="miter" />
<path d="M866.4,1597.5 V1606.5" fill="none" stroke="#cccccc" stroke-width="2.4" stroke-linecap="butt" stroke-linejoin="miter" />
<circle cx="866.40" cy="1610.20" r="1.30" fill="#cccccc" stroke="none" stroke-width="0"/>
<circle cx="933.40" cy="1602.70" r="13.00" fill="none" stroke="#cccccc" stroke-width="2.0"/>
<path d="M933.4,1600.5 V1609.5" fill="none" stroke="#cccccc" stroke-width="2.4" stroke-linecap="butt" stroke-linejoin="miter" />
<circle cx="933.40" cy="1596.80" r="1.40" fill="#cccccc" stroke="none" stroke-width="0"/>
<path d="M1035,1608 C1036,1598 1043,1594 1054.5,1594 V1588.5 L1064.2,1597.5 L1054.5,1606.5 V1601 C1046,1601 1040,1603 1035,1608 Z" fill="none" stroke="#cccccc" stroke-width="2.0" stroke-linecap="butt" stroke-linejoin="miter" />
<circle cx="1047.20" cy="1612.60" r="4.40" fill="none" stroke="#cccccc" stroke-width="2.0"/>
<circle cx="1510.50" cy="1598.50" r="10.50" fill="none" stroke="#cccccc" stroke-width="2.0"/>
<path d="M1518,1606 L1527.5,1615.5 M1510.5,1592.5 V1604.5 M1504.5,1598.5 H1516.5" fill="none" stroke="#cccccc" stroke-width="2.0" stroke-linecap="butt" stroke-linejoin="miter" />
<circle cx="215.20" cy="686.30" r="19.00" fill="#0078d4" stroke="none" stroke-width="0"/>
<text x="215.2" y="694.5" text-anchor="middle" font-family="Liberation Sans" font-weight="700" font-size="23" fill="#ffffff">3</text>
</svg>
<div style="position:absolute;left:1747px;top:633px;width:1500px;height:1096px;border-radius:14px;background:#1c1c1c;box-shadow:0 0 0 1.6px rgba(215,175,125,0.62),0 12px 50px rgba(150,90,10,0.38)"></div>
<div style="position:absolute;left:1762.0px;top:648px;width:14px;height:14px;border-radius:50%;background:#FF5F57"></div>
<div style="position:absolute;left:1785.4px;top:648px;width:14px;height:14px;border-radius:50%;background:#FEBC2E"></div>
<div style="position:absolute;left:1808.5px;top:648px;width:14px;height:14px;border-radius:50%;background:#28C840"></div>
<div style="position:absolute;left:1872.40px;top:649.33px;font-family:'Liberation Sans', sans-serif;font-size:15.5px;line-height:15.5px;color:#8c8c8c;font-weight:700;white-space:pre;">2</div>
<div style="position:absolute;left:2317.70px;top:648.90px;font-family:'Liberation Sans', sans-serif;font-size:16.0px;line-height:16.0px;color:#9a9a9a;font-weight:700;white-space:pre;">pierrephz@Pierres-MacBook-Pro-2:~/Documents/github/thethingsindustries.com</div>
<div style="position:absolute;left:1769.50px;top:705.93px;font-family:'Liberation Mono', monospace;font-size:29.042px;line-height:29.042px;color:#e6e6e6;font-weight:400;white-space:pre;"><span style="color:#e6e6e6">Last login: Wed Apr 30 11:15:44 on ttys000</span></div>
<div style="position:absolute;left:1769.50px;top:739.58px;font-family:'Liberation Mono', monospace;font-size:29.042px;line-height:29.042px;color:#e6e6e6;font-weight:400;white-space:pre;"><span style="color:#5ee07b">  </span><span style="color:#c8a6f5;font-weight:700">thethingsindustries.com</span><span style="color:#8ee7f5;font-weight:700"> (feature/feature-alerting-and-webhooks)</span><span style="color:#5ee07b">   </span><span style="color:#e6e6e6">git checkout</span></div>
<div style="position:absolute;left:1769.50px;top:773.23px;font-family:'Liberation Mono', monospace;font-size:29.042px;line-height:29.042px;color:#e6e6e6;font-weight:400;white-space:pre;"><span style="color:#e6e6e6"> master</span></div>
<div style="position:absolute;left:1769.50px;top:806.88px;font-family:'Liberation Mono', monospace;font-size:29.042px;line-height:29.042px;color:#e6e6e6;font-weight:400;white-space:pre;"><span style="color:#e6e6e6">Switched to branch 'master'</span></div>
<div style="position:absolute;left:1769.50px;top:840.53px;font-family:'Liberation Mono', monospace;font-size:29.042px;line-height:29.042px;color:#e6e6e6;font-weight:400;white-space:pre;"><span style="color:#e6e6e6">Your branch is up to date with 'origin/master'.</span></div>
<div style="position:absolute;left:1769.50px;top:874.18px;font-family:'Liberation Mono', monospace;font-size:29.042px;line-height:29.042px;color:#e6e6e6;font-weight:400;white-space:pre;"><span style="color:#5ee07b">  </span><span style="color:#c8a6f5;font-weight:700">thethingsindustries.com</span><span style="color:#8ee7f5;font-weight:700"> (master)</span><span style="color:#5ee07b">   </span><span style="color:#e6e6e6">git pull</span></div>
<div style="position:absolute;left:1769.50px;top:907.83px;font-family:'Liberation Mono', monospace;font-size:29.042px;line-height:29.042px;color:#e6e6e6;font-weight:400;white-space:pre;"><span style="color:#e6e6e6">remote: Enumerating objects: 511, done.</span></div>
<div style="position:absolute;left:1769.50px;top:941.48px;font-family:'Liberation Mono', monospace;font-size:29.042px;line-height:29.042px;color:#e6e6e6;font-weight:400;white-space:pre;"><span style="color:#e6e6e6">remote: Counting objects: 100% (116/116), done.</span></div>
<div style="position:absolute;left:1769.50px;top:975.13px;font-family:'Liberation Mono', monospace;font-size:29.042px;line-height:29.042px;color:#e6e6e6;font-weight:400;white-space:pre;"><span style="color:#e6e6e6">remote: Compressing objects: 100% (65/65), done.</span></div>
<div style="position:absolute;left:1769.50px;top:1008.78px;font-family:'Liberation Mono', monospace;font-size:29.042px;line-height:29.042px;color:#e6e6e6;font-weight:400;white-space:pre;"><span style="color:#e6e6e6">remote: Total 511 (delta 63), reused 64 (delta 51), pack-reused 395 (from 1)</span></div>
<div style="position:absolute;left:1769.50px;top:1042.43px;font-family:'Liberation Mono', monospace;font-size:29.042px;line-height:29.042px;color:#e6e6e6;font-weight:400;white-space:pre;"><span style="color:#e6e6e6">Receiving objects: 100% (511/511), 2.79 MiB | 5.27 MiB/s, done.</span></div>
<div style="position:absolute;left:1769.50px;top:1076.08px;font-family:'Liberation Mono', monospace;font-size:29.042px;line-height:29.042px;color:#e6e6e6;font-weight:400;white-space:pre;"><span style="color:#e6e6e6">Resolving deltas: 100% (263/263), completed with 18 local objects.</span></div>
<div style="position:absolute;left:1769.50px;top:1109.73px;font-family:'Liberation Mono', monospace;font-size:29.042px;line-height:29.042px;color:#e6e6e6;font-weight:400;white-space:pre;"><span style="color:#e6e6e6">From github.com:TheThingsIndustries/thethingsindustries.com</span></div>
<div style="position:absolute;left:1769.50px;top:1143.38px;font-family:'Liberation Mono', monospace;font-size:29.042px;line-height:29.042px;color:#e6e6e6;font-weight:400;white-space:pre;"><span style="color:#e6e6e6">   47d4a9c..954de84  master          -&gt; origin/master</span></div>
<div style="position:absolute;left:1769.50px;top:1177.03px;font-family:'Liberation Mono', monospace;font-size:29.042px;line-height:29.042px;color:#e6e6e6;font-weight:400;white-space:pre;"><span style="color:#e6e6e6">   [new branch]      fix/partnerlink -&gt; origin/fix/partnerlink</span></div>
<div style="position:absolute;left:1769.50px;top:1210.68px;font-family:'Liberation Mono', monospace;font-size:29.042px;line-height:29.042px;color:#e6e6e6;font-weight:400;white-space:pre;"><span style="color:#e6e6e6">   [new tag]         2.10.9          -&gt; 2.10.9</span></div>
<div style="position:absolute;left:1769.50px;top:1244.33px;font-family:'Liberation Mono', monospace;font-size:29.042px;line-height:29.042px;color:#e6e6e6;font-weight:400;white-space:pre;"><span style="color:#e6e6e6">   [new tag]         2.10.0          -&gt; 2.10.0</span></div>
<div style="position:absolute;left:1769.50px;top:1277.98px;font-family:'Liberation Mono', monospace;font-size:29.042px;line-height:29.042px;color:#e6e6e6;font-weight:400;white-space:pre;"><span style="color:#e6e6e6">   [new tag]         2.10.1          -&gt; 2.10.1</span></div>
<div style="position:absolute;left:1769.50px;top:1311.63px;font-family:'Liberation Mono', monospace;font-size:29.042px;line-height:29.042px;color:#e6e6e6;font-weight:400;white-space:pre;"><span style="color:#e6e6e6">   [new tag]         2.10.3          -&gt; 2.10.3</span></div>
<div style="position:absolute;left:1769.50px;top:1345.28px;font-family:'Liberation Mono', monospace;font-size:29.042px;line-height:29.042px;color:#e6e6e6;font-weight:400;white-space:pre;"><span style="color:#e6e6e6">   [new tag]         2.10.4          -&gt; 2.10.4</span></div>
<div style="position:absolute;left:1769.50px;top:1378.93px;font-family:'Liberation Mono', monospace;font-size:29.042px;line-height:29.042px;color:#e6e6e6;font-weight:400;white-space:pre;"><span style="color:#e6e6e6">   [new tag]         2.10.5          -&gt; 2.10.5</span></div>
<div style="position:absolute;left:1769.50px;top:1412.58px;font-family:'Liberation Mono', monospace;font-size:29.042px;line-height:29.042px;color:#e6e6e6;font-weight:400;white-space:pre;"><span style="color:#e6e6e6">   [new tag]         2.10.6          -&gt; 2.10.6</span></div>
<div style="position:absolute;left:1769.50px;top:1446.23px;font-family:'Liberation Mono', monospace;font-size:29.042px;line-height:29.042px;color:#e6e6e6;font-weight:400;white-space:pre;"><span style="color:#e6e6e6">   [new tag]         2.10.7          -&gt; 2.10.7</span></div>
<div style="position:absolute;left:1769.50px;top:1479.88px;font-family:'Liberation Mono', monospace;font-size:29.042px;line-height:29.042px;color:#e6e6e6;font-weight:400;white-space:pre;"><span style="color:#e6e6e6">   [new tag]         2.10.8          -&gt; 2.10.8</span></div>
<div style="position:absolute;left:1769.50px;top:1513.53px;font-family:'Liberation Mono', monospace;font-size:29.042px;line-height:29.042px;color:#e6e6e6;font-weight:400;white-space:pre;"><span style="color:#e6e6e6">   [new tag]         v2.10.2         -&gt; v2.10.2</span></div>
<div style="position:absolute;left:1769.50px;top:1547.18px;font-family:'Liberation Mono', monospace;font-size:29.042px;line-height:29.042px;color:#e6e6e6;font-weight:400;white-space:pre;"><span style="color:#e6e6e6">Updating 47d4a9c..954de84</span></div>
<div style="position:absolute;left:1769.50px;top:1580.83px;font-family:'Liberation Mono', monospace;font-size:29.042px;line-height:29.042px;color:#e6e6e6;font-weight:400;white-space:pre;"><span style="color:#e6e6e6">Fast-forward</span></div>
<div style="position:absolute;left:1769.50px;top:1614.48px;font-family:'Liberation Mono', monospace;font-size:29.042px;line-height:29.042px;color:#e6e6e6;font-weight:400;white-space:pre;"><span style="color:#e6e6e6"> .gitignore                                         |   1 </span><span style="color:#5ee07b">+</span></div>
<div style="position:absolute;left:1769.50px;top:1648.13px;font-family:'Liberation Mono', monospace;font-size:29.042px;line-height:29.042px;color:#e6e6e6;font-weight:400;white-space:pre;"><span style="color:#e6e6e6"> deploy/5_service.yaml                              | 253 </span><span style="color:#5ee07b">+++++++++</span></div>
<svg style="position:absolute;left:0;top:0" width="3200" height="1800"><path d="M1795.64,1182.90 L1795.64,1198.50 M1788.88,1186.80 L1802.39,1194.60 M1802.39,1186.80 L1788.88,1194.60 " fill="none" stroke="#e6e6e6" stroke-width="2.2" stroke-linecap="round"/><path d="M1795.64,1216.55 L1795.64,1232.15 M1788.88,1220.45 L1802.39,1228.25 M1802.39,1220.45 L1788.88,1228.25 " fill="none" stroke="#e6e6e6" stroke-width="2.2" stroke-linecap="round"/><path d="M1795.64,1250.20 L1795.64,1265.80 M1788.88,1254.10 L1802.39,1261.90 M1802.39,1254.10 L1788.88,1261.90 " fill="none" stroke="#e6e6e6" stroke-width="2.2" stroke-linecap="round"/><path d="M1795.64,1283.85 L1795.64,1299.45 M1788.88,1287.75 L1802.39,1295.55 M1802.39,1287.75 L1788.88,1295.55 " fill="none" stroke="#e6e6e6" stroke-width="2.2" stroke-linecap="round"/><path d="M1795.64,1317.50 L1795.64,1333.10 M1788.88,1321.40 L1802.39,1329.20 M1802.39,1321.40 L1788.88,1329.20 " fill="none" stroke="#e6e6e6" stroke-width="2.2" stroke-linecap="round"/><path d="M1795.64,1351.15 L1795.64,1366.75 M1788.88,1355.05 L1802.39,1362.85 M1802.39,1355.05 L1788.88,1362.85 " fill="none" stroke="#e6e6e6" stroke-width="2.2" stroke-linecap="round"/><path d="M1795.64,1384.80 L1795.64,1400.40 M1788.88,1388.70 L1802.39,1396.50 M1802.39,1388.70 L1788.88,1396.50 " fill="none" stroke="#e6e6e6" stroke-width="2.2" stroke-linecap="round"/><path d="M1795.64,1418.45 L1795.64,1434.05 M1788.88,1422.35 L1802.39,1430.15 M1802.39,1422.35 L1788.88,1430.15 " fill="none" stroke="#e6e6e6" stroke-width="2.2" stroke-linecap="round"/><path d="M1795.64,1452.10 L1795.64,1467.70 M1788.88,1456.00 L1802.39,1463.80 M1802.39,1456.00 L1788.88,1463.80 " fill="none" stroke="#e6e6e6" stroke-width="2.2" stroke-linecap="round"/><path d="M1795.64,1485.75 L1795.64,1501.35 M1788.88,1489.65 L1802.39,1497.45 M1802.39,1489.65 L1788.88,1497.45 " fill="none" stroke="#e6e6e6" stroke-width="2.2" stroke-linecap="round"/><path d="M1795.64,1519.40 L1795.64,1535.00 M1788.88,1523.30 L1802.39,1531.10 M1802.39,1523.30 L1788.88,1531.10 " fill="none" stroke="#e6e6e6" stroke-width="2.2" stroke-linecap="round"/><path d="M2920.4,754.1 L2923.2,752.1 L2926.2,757.4 L2934.2,745.4 L2936.0,747.0 L2926.8,762.2 L2924.8,762.2 Z" fill="#5ee07b"/><path d="M2380.2,888.8 L2383.0,886.8 L2386.0,892.0 L2394.0,880.0 L2395.8,881.6 L2386.6,896.9 L2384.6,896.9 Z" fill="#5ee07b"/><path d="M1845,651.2 H1849.2 L1853.2,660.6 H1856 M1851,651.2 H1856" fill="none" stroke="#8c8c8c" stroke-width="2"/><path d="M1862,653.2 H1868 M1862,658.8 H1868 M1862.3,652.8 V659.2 M1867.7,652.8 V659.2" fill="none" stroke="#8c8c8c" stroke-width="1.6"/><circle cx="1860.7" cy="651.6" r="1.9" fill="none" stroke="#8c8c8c" stroke-width="1.5"/><circle cx="1869.3" cy="651.6" r="1.9" fill="none" stroke="#8c8c8c" stroke-width="1.5"/><circle cx="1860.7" cy="660.4" r="1.9" fill="none" stroke="#8c8c8c" stroke-width="1.5"/><circle cx="1869.3" cy="660.4" r="1.9" fill="none" stroke="#8c8c8c" stroke-width="1.5"/><path d="M1772,752.1 H1785 M1780.5,747.1 L1785.5,752.1 L1780.5,757.1" fill="none" stroke="#5ee07b" stroke-width="3"/><path d="M1772,886.8 H1785 M1780.5,881.8 L1785.5,886.8 L1780.5,891.8" fill="none" stroke="#5ee07b" stroke-width="3"/></svg>
</div></body></html>
